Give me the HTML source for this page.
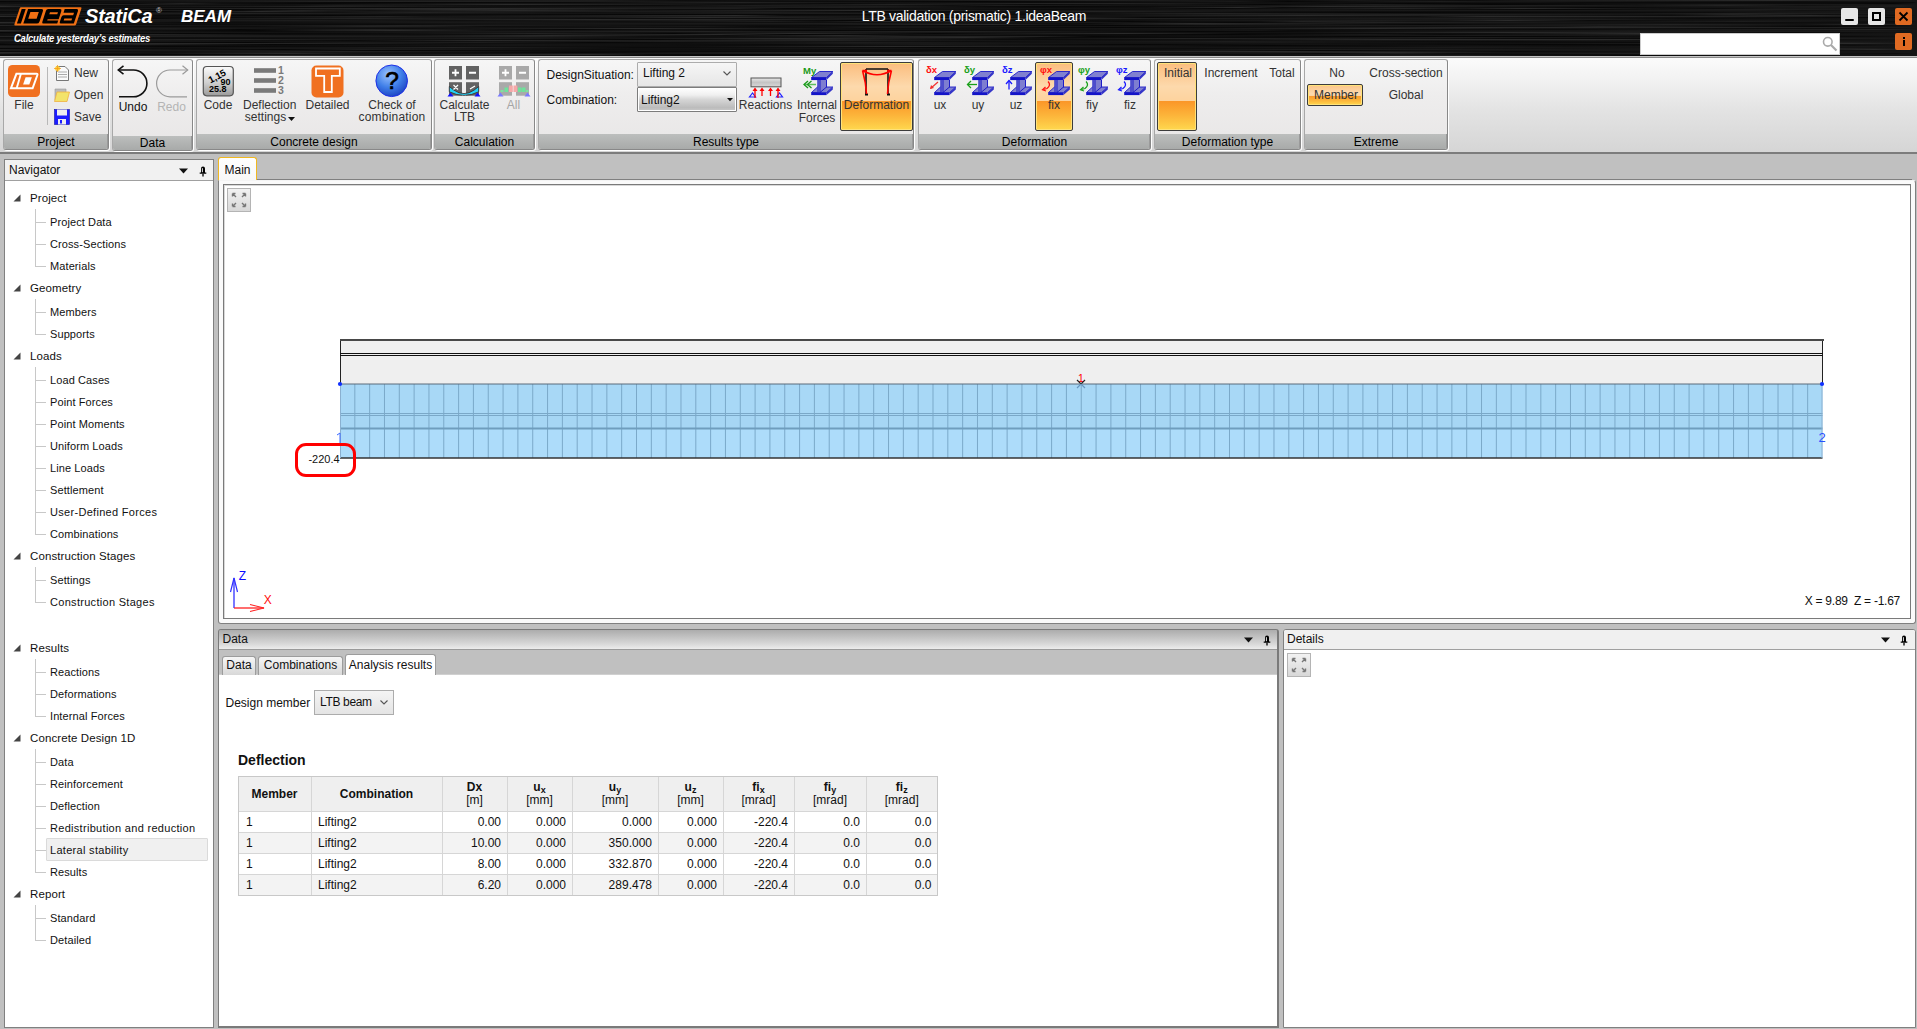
<!DOCTYPE html>
<html><head><meta charset="utf-8">
<style>
*{margin:0;padding:0;box-sizing:border-box}
html,body{width:1917px;height:1029px;overflow:hidden;background:#c0c0c0;font-family:"Liberation Sans",sans-serif;font-size:12px;color:#000;position:relative}
.a{position:absolute}
.t{position:absolute;white-space:nowrap;line-height:1}
svg{overflow:visible}
sub{font-size:9px;vertical-align:-2px;line-height:0}
</style></head><body>
<div class="a" style="left:0;top:0;width:1917px;height:56px;background:#0c0c0c;overflow:hidden">
<div class="a" style="left:0;top:0px;width:1917px;height:1px;background:linear-gradient(90deg,rgb(23,23,23) 0px,rgb(23,23,23) 183px,rgb(25,25,25) 338px,rgb(29,29,29) 596px,rgb(13,13,13) 684px,rgb(25,25,25) 929px,rgb(35,35,35) 1090px,rgb(13,13,13) 1287px,rgb(23,23,23) 1351px,rgb(13,13,13) 1468px,rgb(25,25,25) 1531px,rgb(43,43,43) 1778px,rgb(21,21,21) 1917px)"></div>
<div class="a" style="left:0;top:1px;width:1917px;height:1px;background:linear-gradient(90deg,rgb(7,7,7) 0px,rgb(21,21,21) 192px,rgb(35,35,35) 347px,rgb(29,29,29) 576px,rgb(13,13,13) 782px,rgb(7,7,7) 981px,rgb(25,25,25) 1233px,rgb(7,7,7) 1289px,rgb(15,15,15) 1338px,rgb(29,29,29) 1439px,rgb(23,23,23) 1486px,rgb(23,23,23) 1609px,rgb(15,15,15) 1800px,rgb(21,21,21) 1917px)"></div>
<div class="a" style="left:0;top:2px;width:1917px;height:1px;background:linear-gradient(90deg,rgb(15,15,15) 0px,rgb(17,17,17) 203px,rgb(7,7,7) 370px,rgb(11,11,11) 579px,rgb(35,35,35) 736px,rgb(21,21,21) 847px,rgb(11,11,11) 1028px,rgb(17,17,17) 1249px,rgb(15,15,15) 1369px,rgb(17,17,17) 1540px,rgb(11,11,11) 1587px,rgb(11,11,11) 1771px,rgb(11,11,11) 1913px,rgb(21,21,21) 1917px)"></div>
<div class="a" style="left:0;top:3px;width:1917px;height:1px;background:linear-gradient(90deg,rgb(17,17,17) 0px,rgb(11,11,11) 138px,rgb(35,35,35) 182px,rgb(15,15,15) 222px,rgb(7,7,7) 315px,rgb(21,21,21) 475px,rgb(21,21,21) 696px,rgb(11,11,11) 843px,rgb(35,35,35) 1027px,rgb(35,35,35) 1117px,rgb(19,19,19) 1226px,rgb(17,17,17) 1288px,rgb(7,7,7) 1413px,rgb(11,11,11) 1557px,rgb(15,15,15) 1631px,rgb(11,11,11) 1851px,rgb(7,7,7) 1893px,rgb(21,21,21) 1917px)"></div>
<div class="a" style="left:0;top:4px;width:1917px;height:1px;background:linear-gradient(90deg,rgb(23,23,23) 0px,rgb(35,35,35) 85px,rgb(15,15,15) 268px,rgb(25,25,25) 422px,rgb(43,43,43) 510px,rgb(13,13,13) 746px,rgb(35,35,35) 893px,rgb(11,11,11) 1031px,rgb(21,21,21) 1172px,rgb(7,7,7) 1266px,rgb(29,29,29) 1375px,rgb(7,7,7) 1492px,rgb(13,13,13) 1585px,rgb(29,29,29) 1725px,rgb(21,21,21) 1917px)"></div>
<div class="a" style="left:0;top:5px;width:1917px;height:1px;background:linear-gradient(90deg,rgb(29,29,29) 0px,rgb(7,7,7) 65px,rgb(15,15,15) 142px,rgb(17,17,17) 295px,rgb(29,29,29) 337px,rgb(17,17,17) 461px,rgb(11,11,11) 599px,rgb(11,11,11) 658px,rgb(29,29,29) 751px,rgb(15,15,15) 953px,rgb(29,29,29) 996px,rgb(19,19,19) 1130px,rgb(23,23,23) 1329px,rgb(29,29,29) 1401px,rgb(29,29,29) 1564px,rgb(21,21,21) 1638px,rgb(35,35,35) 1724px,rgb(17,17,17) 1803px,rgb(29,29,29) 1901px,rgb(21,21,21) 1917px)"></div>
<div class="a" style="left:0;top:6px;width:1917px;height:1px;background:linear-gradient(90deg,rgb(43,43,43) 0px,rgb(13,13,13) 88px,rgb(35,35,35) 317px,rgb(15,15,15) 498px,rgb(21,21,21) 713px,rgb(29,29,29) 876px,rgb(21,21,21) 936px,rgb(11,11,11) 988px,rgb(7,7,7) 1055px,rgb(17,17,17) 1226px,rgb(43,43,43) 1327px,rgb(21,21,21) 1547px,rgb(21,21,21) 1652px,rgb(29,29,29) 1902px,rgb(21,21,21) 1917px)"></div>
<div class="a" style="left:0;top:7px;width:1917px;height:1px;background:linear-gradient(90deg,rgb(17,17,17) 0px,rgb(13,13,13) 173px,rgb(11,11,11) 397px,rgb(15,15,15) 469px,rgb(25,25,25) 631px,rgb(29,29,29) 838px,rgb(11,11,11) 1035px,rgb(15,15,15) 1146px,rgb(43,43,43) 1238px,rgb(11,11,11) 1282px,rgb(21,21,21) 1390px,rgb(15,15,15) 1544px,rgb(7,7,7) 1599px,rgb(17,17,17) 1684px,rgb(25,25,25) 1818px,rgb(21,21,21) 1917px)"></div>
<div class="a" style="left:0;top:8px;width:1917px;height:1px;background:linear-gradient(90deg,rgb(13,13,13) 0px,rgb(19,19,19) 63px,rgb(23,23,23) 138px,rgb(35,35,35) 262px,rgb(43,43,43) 489px,rgb(29,29,29) 662px,rgb(29,29,29) 737px,rgb(7,7,7) 785px,rgb(19,19,19) 946px,rgb(17,17,17) 1165px,rgb(7,7,7) 1213px,rgb(35,35,35) 1406px,rgb(23,23,23) 1465px,rgb(43,43,43) 1522px,rgb(19,19,19) 1641px,rgb(11,11,11) 1715px,rgb(23,23,23) 1774px,rgb(21,21,21) 1917px)"></div>
<div class="a" style="left:0;top:9px;width:1917px;height:1px;background:linear-gradient(90deg,rgb(19,19,19) 0px,rgb(7,7,7) 228px,rgb(43,43,43) 456px,rgb(13,13,13) 676px,rgb(19,19,19) 919px,rgb(11,11,11) 1049px,rgb(23,23,23) 1264px,rgb(21,21,21) 1323px,rgb(7,7,7) 1565px,rgb(29,29,29) 1732px,rgb(29,29,29) 1775px,rgb(21,21,21) 1917px)"></div>
<div class="a" style="left:0;top:10px;width:1917px;height:1px;background:linear-gradient(90deg,rgb(21,21,21) 0px,rgb(29,29,29) 137px,rgb(29,29,29) 180px,rgb(11,11,11) 238px,rgb(35,35,35) 301px,rgb(17,17,17) 370px,rgb(43,43,43) 516px,rgb(21,21,21) 640px,rgb(43,43,43) 868px,rgb(23,23,23) 1056px,rgb(23,23,23) 1208px,rgb(25,25,25) 1462px,rgb(25,25,25) 1523px,rgb(25,25,25) 1755px,rgb(17,17,17) 1802px,rgb(21,21,21) 1917px)"></div>
<div class="a" style="left:0;top:11px;width:1917px;height:1px;background:linear-gradient(90deg,rgb(11,11,11) 0px,rgb(7,7,7) 163px,rgb(43,43,43) 261px,rgb(23,23,23) 329px,rgb(29,29,29) 568px,rgb(23,23,23) 776px,rgb(7,7,7) 881px,rgb(17,17,17) 1015px,rgb(35,35,35) 1091px,rgb(15,15,15) 1287px,rgb(13,13,13) 1459px,rgb(19,19,19) 1691px,rgb(23,23,23) 1899px,rgb(21,21,21) 1917px)"></div>
<div class="a" style="left:0;top:12px;width:1917px;height:1px;background:linear-gradient(90deg,rgb(15,15,15) 0px,rgb(21,21,21) 123px,rgb(17,17,17) 333px,rgb(35,35,35) 423px,rgb(15,15,15) 573px,rgb(21,21,21) 667px,rgb(29,29,29) 763px,rgb(15,15,15) 884px,rgb(13,13,13) 958px,rgb(19,19,19) 1125px,rgb(7,7,7) 1379px,rgb(11,11,11) 1601px,rgb(13,13,13) 1711px,rgb(23,23,23) 1779px,rgb(21,21,21) 1917px)"></div>
<div class="a" style="left:0;top:13px;width:1917px;height:1px;background:linear-gradient(90deg,rgb(17,17,17) 0px,rgb(21,21,21) 94px,rgb(35,35,35) 231px,rgb(23,23,23) 404px,rgb(19,19,19) 616px,rgb(29,29,29) 839px,rgb(19,19,19) 994px,rgb(7,7,7) 1053px,rgb(29,29,29) 1164px,rgb(35,35,35) 1214px,rgb(17,17,17) 1435px,rgb(19,19,19) 1621px,rgb(35,35,35) 1740px,rgb(21,21,21) 1917px)"></div>
<div class="a" style="left:0;top:14px;width:1917px;height:1px;background:linear-gradient(90deg,rgb(29,29,29) 0px,rgb(35,35,35) 44px,rgb(21,21,21) 118px,rgb(15,15,15) 274px,rgb(17,17,17) 320px,rgb(13,13,13) 420px,rgb(7,7,7) 663px,rgb(11,11,11) 864px,rgb(11,11,11) 1018px,rgb(25,25,25) 1219px,rgb(35,35,35) 1426px,rgb(19,19,19) 1672px,rgb(35,35,35) 1731px,rgb(15,15,15) 1821px,rgb(21,21,21) 1917px)"></div>
<div class="a" style="left:0;top:15px;width:1917px;height:1px;background:linear-gradient(90deg,rgb(23,23,23) 0px,rgb(13,13,13) 105px,rgb(7,7,7) 327px,rgb(23,23,23) 560px,rgb(43,43,43) 736px,rgb(13,13,13) 785px,rgb(17,17,17) 882px,rgb(19,19,19) 1121px,rgb(43,43,43) 1299px,rgb(25,25,25) 1472px,rgb(13,13,13) 1669px,rgb(43,43,43) 1809px,rgb(11,11,11) 1906px,rgb(21,21,21) 1917px)"></div>
<div class="a" style="left:0;top:16px;width:1917px;height:1px;background:linear-gradient(90deg,rgb(43,43,43) 0px,rgb(13,13,13) 139px,rgb(23,23,23) 294px,rgb(35,35,35) 384px,rgb(21,21,21) 425px,rgb(29,29,29) 605px,rgb(25,25,25) 812px,rgb(19,19,19) 1055px,rgb(19,19,19) 1213px,rgb(15,15,15) 1419px,rgb(43,43,43) 1484px,rgb(35,35,35) 1733px,rgb(21,21,21) 1917px)"></div>
<div class="a" style="left:0;top:17px;width:1917px;height:1px;background:linear-gradient(90deg,rgb(11,11,11) 0px,rgb(15,15,15) 94px,rgb(11,11,11) 233px,rgb(25,25,25) 352px,rgb(19,19,19) 594px,rgb(43,43,43) 701px,rgb(7,7,7) 960px,rgb(25,25,25) 1089px,rgb(7,7,7) 1150px,rgb(19,19,19) 1302px,rgb(21,21,21) 1482px,rgb(17,17,17) 1718px,rgb(7,7,7) 1882px,rgb(21,21,21) 1917px)"></div>
<div class="a" style="left:0;top:18px;width:1917px;height:1px;background:linear-gradient(90deg,rgb(11,11,11) 0px,rgb(7,7,7) 149px,rgb(25,25,25) 233px,rgb(35,35,35) 358px,rgb(13,13,13) 599px,rgb(13,13,13) 759px,rgb(43,43,43) 931px,rgb(35,35,35) 1103px,rgb(23,23,23) 1319px,rgb(29,29,29) 1485px,rgb(11,11,11) 1701px,rgb(21,21,21) 1917px)"></div>
<div class="a" style="left:0;top:19px;width:1917px;height:1px;background:linear-gradient(90deg,rgb(15,15,15) 0px,rgb(25,25,25) 152px,rgb(17,17,17) 335px,rgb(43,43,43) 587px,rgb(35,35,35) 770px,rgb(25,25,25) 852px,rgb(25,25,25) 1023px,rgb(17,17,17) 1128px,rgb(21,21,21) 1339px,rgb(29,29,29) 1595px,rgb(17,17,17) 1688px,rgb(21,21,21) 1917px)"></div>
<div class="a" style="left:0;top:20px;width:1917px;height:1px;background:linear-gradient(90deg,rgb(13,13,13) 0px,rgb(25,25,25) 179px,rgb(29,29,29) 288px,rgb(15,15,15) 455px,rgb(25,25,25) 600px,rgb(25,25,25) 669px,rgb(29,29,29) 710px,rgb(7,7,7) 846px,rgb(7,7,7) 1023px,rgb(21,21,21) 1195px,rgb(29,29,29) 1374px,rgb(23,23,23) 1445px,rgb(43,43,43) 1508px,rgb(11,11,11) 1590px,rgb(23,23,23) 1767px,rgb(21,21,21) 1912px,rgb(21,21,21) 1917px)"></div>
<div class="a" style="left:0;top:21px;width:1917px;height:1px;background:linear-gradient(90deg,rgb(15,15,15) 0px,rgb(23,23,23) 161px,rgb(19,19,19) 233px,rgb(23,23,23) 384px,rgb(19,19,19) 558px,rgb(15,15,15) 625px,rgb(29,29,29) 772px,rgb(17,17,17) 819px,rgb(43,43,43) 892px,rgb(7,7,7) 1131px,rgb(15,15,15) 1180px,rgb(15,15,15) 1259px,rgb(35,35,35) 1302px,rgb(19,19,19) 1414px,rgb(19,19,19) 1639px,rgb(29,29,29) 1741px,rgb(11,11,11) 1908px,rgb(21,21,21) 1917px)"></div>
<div class="a" style="left:0;top:22px;width:1917px;height:1px;background:linear-gradient(90deg,rgb(43,43,43) 0px,rgb(11,11,11) 189px,rgb(25,25,25) 447px,rgb(17,17,17) 646px,rgb(15,15,15) 869px,rgb(25,25,25) 1088px,rgb(7,7,7) 1239px,rgb(35,35,35) 1375px,rgb(25,25,25) 1520px,rgb(13,13,13) 1717px,rgb(15,15,15) 1894px,rgb(21,21,21) 1917px)"></div>
<div class="a" style="left:0;top:23px;width:1917px;height:1px;background:linear-gradient(90deg,rgb(25,25,25) 0px,rgb(15,15,15) 203px,rgb(15,15,15) 378px,rgb(25,25,25) 635px,rgb(29,29,29) 831px,rgb(13,13,13) 1090px,rgb(43,43,43) 1189px,rgb(19,19,19) 1389px,rgb(19,19,19) 1475px,rgb(19,19,19) 1669px,rgb(15,15,15) 1758px,rgb(21,21,21) 1917px)"></div>
<div class="a" style="left:0;top:24px;width:1917px;height:1px;background:linear-gradient(90deg,rgb(15,15,15) 0px,rgb(13,13,13) 64px,rgb(13,13,13) 165px,rgb(11,11,11) 391px,rgb(21,21,21) 497px,rgb(21,21,21) 561px,rgb(21,21,21) 814px,rgb(43,43,43) 993px,rgb(15,15,15) 1065px,rgb(35,35,35) 1208px,rgb(7,7,7) 1423px,rgb(15,15,15) 1487px,rgb(35,35,35) 1672px,rgb(19,19,19) 1803px,rgb(43,43,43) 1872px,rgb(21,21,21) 1917px)"></div>
<div class="a" style="left:0;top:25px;width:1917px;height:1px;background:linear-gradient(90deg,rgb(35,35,35) 0px,rgb(19,19,19) 234px,rgb(35,35,35) 402px,rgb(15,15,15) 655px,rgb(11,11,11) 900px,rgb(11,11,11) 1063px,rgb(7,7,7) 1109px,rgb(25,25,25) 1344px,rgb(25,25,25) 1541px,rgb(23,23,23) 1726px,rgb(15,15,15) 1803px,rgb(11,11,11) 1890px,rgb(21,21,21) 1917px)"></div>
<div class="a" style="left:0;top:26px;width:1917px;height:1px;background:linear-gradient(90deg,rgb(13,13,13) 0px,rgb(13,13,13) 255px,rgb(35,35,35) 367px,rgb(29,29,29) 431px,rgb(13,13,13) 486px,rgb(23,23,23) 700px,rgb(11,11,11) 759px,rgb(21,21,21) 882px,rgb(21,21,21) 1041px,rgb(19,19,19) 1212px,rgb(15,15,15) 1362px,rgb(19,19,19) 1555px,rgb(35,35,35) 1598px,rgb(7,7,7) 1817px,rgb(21,21,21) 1917px)"></div>
<div class="a" style="left:0;top:27px;width:1917px;height:1px;background:linear-gradient(90deg,rgb(15,15,15) 0px,rgb(21,21,21) 86px,rgb(19,19,19) 242px,rgb(19,19,19) 471px,rgb(15,15,15) 614px,rgb(13,13,13) 808px,rgb(25,25,25) 872px,rgb(7,7,7) 1114px,rgb(11,11,11) 1236px,rgb(43,43,43) 1481px,rgb(35,35,35) 1741px,rgb(29,29,29) 1884px,rgb(21,21,21) 1917px)"></div>
<div class="a" style="left:0;top:28px;width:1917px;height:1px;background:linear-gradient(90deg,rgb(15,15,15) 0px,rgb(29,29,29) 169px,rgb(17,17,17) 296px,rgb(11,11,11) 407px,rgb(43,43,43) 637px,rgb(13,13,13) 876px,rgb(21,21,21) 1124px,rgb(19,19,19) 1198px,rgb(43,43,43) 1375px,rgb(21,21,21) 1509px,rgb(13,13,13) 1744px,rgb(15,15,15) 1887px,rgb(21,21,21) 1917px)"></div>
<div class="a" style="left:0;top:29px;width:1917px;height:1px;background:linear-gradient(90deg,rgb(13,13,13) 0px,rgb(19,19,19) 58px,rgb(23,23,23) 175px,rgb(7,7,7) 240px,rgb(35,35,35) 371px,rgb(7,7,7) 570px,rgb(17,17,17) 669px,rgb(17,17,17) 879px,rgb(15,15,15) 1005px,rgb(21,21,21) 1213px,rgb(13,13,13) 1398px,rgb(11,11,11) 1574px,rgb(25,25,25) 1713px,rgb(35,35,35) 1880px,rgb(21,21,21) 1917px)"></div>
<div class="a" style="left:0;top:30px;width:1917px;height:1px;background:linear-gradient(90deg,rgb(43,43,43) 0px,rgb(21,21,21) 70px,rgb(7,7,7) 257px,rgb(29,29,29) 326px,rgb(43,43,43) 393px,rgb(17,17,17) 493px,rgb(21,21,21) 646px,rgb(7,7,7) 815px,rgb(15,15,15) 1049px,rgb(21,21,21) 1254px,rgb(11,11,11) 1296px,rgb(17,17,17) 1402px,rgb(19,19,19) 1512px,rgb(25,25,25) 1692px,rgb(21,21,21) 1862px,rgb(21,21,21) 1917px)"></div>
<div class="a" style="left:0;top:31px;width:1917px;height:1px;background:linear-gradient(90deg,rgb(29,29,29) 0px,rgb(11,11,11) 256px,rgb(23,23,23) 459px,rgb(35,35,35) 706px,rgb(25,25,25) 765px,rgb(35,35,35) 957px,rgb(7,7,7) 1191px,rgb(13,13,13) 1329px,rgb(23,23,23) 1467px,rgb(23,23,23) 1550px,rgb(29,29,29) 1728px,rgb(21,21,21) 1917px)"></div>
<div class="a" style="left:0;top:32px;width:1917px;height:1px;background:linear-gradient(90deg,rgb(7,7,7) 0px,rgb(23,23,23) 149px,rgb(17,17,17) 296px,rgb(21,21,21) 470px,rgb(17,17,17) 663px,rgb(25,25,25) 796px,rgb(23,23,23) 909px,rgb(17,17,17) 1116px,rgb(17,17,17) 1299px,rgb(43,43,43) 1508px,rgb(17,17,17) 1739px,rgb(7,7,7) 1785px,rgb(21,21,21) 1917px)"></div>
<div class="a" style="left:0;top:33px;width:1917px;height:1px;background:linear-gradient(90deg,rgb(15,15,15) 0px,rgb(7,7,7) 189px,rgb(13,13,13) 391px,rgb(35,35,35) 535px,rgb(7,7,7) 674px,rgb(43,43,43) 794px,rgb(7,7,7) 935px,rgb(43,43,43) 1123px,rgb(11,11,11) 1244px,rgb(15,15,15) 1488px,rgb(43,43,43) 1637px,rgb(17,17,17) 1799px,rgb(21,21,21) 1917px)"></div>
<div class="a" style="left:0;top:34px;width:1917px;height:1px;background:linear-gradient(90deg,rgb(15,15,15) 0px,rgb(25,25,25) 51px,rgb(43,43,43) 116px,rgb(13,13,13) 275px,rgb(15,15,15) 524px,rgb(43,43,43) 718px,rgb(7,7,7) 787px,rgb(21,21,21) 986px,rgb(11,11,11) 1142px,rgb(7,7,7) 1234px,rgb(25,25,25) 1365px,rgb(11,11,11) 1444px,rgb(23,23,23) 1577px,rgb(35,35,35) 1652px,rgb(23,23,23) 1798px,rgb(21,21,21) 1917px)"></div>
<div class="a" style="left:0;top:35px;width:1917px;height:1px;background:linear-gradient(90deg,rgb(17,17,17) 0px,rgb(29,29,29) 203px,rgb(21,21,21) 417px,rgb(43,43,43) 550px,rgb(13,13,13) 725px,rgb(43,43,43) 839px,rgb(15,15,15) 911px,rgb(11,11,11) 1074px,rgb(17,17,17) 1242px,rgb(25,25,25) 1482px,rgb(19,19,19) 1681px,rgb(17,17,17) 1791px,rgb(21,21,21) 1917px)"></div>
<div class="a" style="left:0;top:36px;width:1917px;height:1px;background:linear-gradient(90deg,rgb(35,35,35) 0px,rgb(29,29,29) 225px,rgb(29,29,29) 443px,rgb(35,35,35) 531px,rgb(15,15,15) 642px,rgb(15,15,15) 730px,rgb(35,35,35) 898px,rgb(35,35,35) 988px,rgb(35,35,35) 1038px,rgb(7,7,7) 1093px,rgb(17,17,17) 1202px,rgb(7,7,7) 1350px,rgb(7,7,7) 1549px,rgb(15,15,15) 1615px,rgb(17,17,17) 1793px,rgb(11,11,11) 1851px,rgb(21,21,21) 1917px)"></div>
<div class="a" style="left:0;top:37px;width:1917px;height:1px;background:linear-gradient(90deg,rgb(13,13,13) 0px,rgb(15,15,15) 180px,rgb(19,19,19) 381px,rgb(23,23,23) 544px,rgb(15,15,15) 674px,rgb(19,19,19) 800px,rgb(43,43,43) 966px,rgb(11,11,11) 1040px,rgb(11,11,11) 1285px,rgb(29,29,29) 1439px,rgb(15,15,15) 1693px,rgb(21,21,21) 1846px,rgb(21,21,21) 1917px)"></div>
<div class="a" style="left:0;top:38px;width:1917px;height:1px;background:linear-gradient(90deg,rgb(17,17,17) 0px,rgb(13,13,13) 139px,rgb(13,13,13) 273px,rgb(29,29,29) 480px,rgb(17,17,17) 603px,rgb(43,43,43) 783px,rgb(13,13,13) 1034px,rgb(35,35,35) 1183px,rgb(29,29,29) 1317px,rgb(23,23,23) 1381px,rgb(11,11,11) 1503px,rgb(11,11,11) 1682px,rgb(29,29,29) 1832px,rgb(21,21,21) 1917px)"></div>
<div class="a" style="left:0;top:39px;width:1917px;height:1px;background:linear-gradient(90deg,rgb(23,23,23) 0px,rgb(35,35,35) 248px,rgb(17,17,17) 406px,rgb(7,7,7) 656px,rgb(17,17,17) 715px,rgb(35,35,35) 809px,rgb(11,11,11) 1003px,rgb(17,17,17) 1220px,rgb(43,43,43) 1386px,rgb(43,43,43) 1621px,rgb(17,17,17) 1744px,rgb(15,15,15) 1820px,rgb(21,21,21) 1917px)"></div>
<div class="a" style="left:0;top:40px;width:1917px;height:1px;background:linear-gradient(90deg,rgb(35,35,35) 0px,rgb(19,19,19) 225px,rgb(11,11,11) 358px,rgb(43,43,43) 480px,rgb(29,29,29) 632px,rgb(35,35,35) 824px,rgb(23,23,23) 935px,rgb(17,17,17) 1110px,rgb(19,19,19) 1267px,rgb(21,21,21) 1363px,rgb(25,25,25) 1589px,rgb(11,11,11) 1692px,rgb(19,19,19) 1824px,rgb(19,19,19) 1870px,rgb(21,21,21) 1917px)"></div>
<div class="a" style="left:0;top:41px;width:1917px;height:1px;background:linear-gradient(90deg,rgb(21,21,21) 0px,rgb(21,21,21) 189px,rgb(15,15,15) 432px,rgb(29,29,29) 661px,rgb(21,21,21) 795px,rgb(13,13,13) 973px,rgb(29,29,29) 1227px,rgb(13,13,13) 1411px,rgb(11,11,11) 1496px,rgb(23,23,23) 1730px,rgb(21,21,21) 1917px)"></div>
<div class="a" style="left:0;top:42px;width:1917px;height:1px;background:linear-gradient(90deg,rgb(17,17,17) 0px,rgb(7,7,7) 247px,rgb(25,25,25) 343px,rgb(25,25,25) 397px,rgb(29,29,29) 477px,rgb(7,7,7) 592px,rgb(21,21,21) 798px,rgb(29,29,29) 854px,rgb(17,17,17) 1033px,rgb(25,25,25) 1274px,rgb(19,19,19) 1335px,rgb(17,17,17) 1395px,rgb(11,11,11) 1623px,rgb(11,11,11) 1743px,rgb(35,35,35) 1789px,rgb(21,21,21) 1917px)"></div>
<div class="a" style="left:0;top:43px;width:1917px;height:1px;background:linear-gradient(90deg,rgb(13,13,13) 0px,rgb(43,43,43) 64px,rgb(35,35,35) 312px,rgb(15,15,15) 460px,rgb(15,15,15) 682px,rgb(25,25,25) 847px,rgb(23,23,23) 973px,rgb(19,19,19) 1113px,rgb(19,19,19) 1239px,rgb(13,13,13) 1451px,rgb(23,23,23) 1617px,rgb(43,43,43) 1794px,rgb(43,43,43) 1852px,rgb(21,21,21) 1917px)"></div>
<div class="a" style="left:0;top:44px;width:1917px;height:1px;background:linear-gradient(90deg,rgb(7,7,7) 0px,rgb(35,35,35) 145px,rgb(7,7,7) 274px,rgb(21,21,21) 520px,rgb(11,11,11) 773px,rgb(25,25,25) 931px,rgb(7,7,7) 1134px,rgb(19,19,19) 1308px,rgb(7,7,7) 1529px,rgb(11,11,11) 1774px,rgb(21,21,21) 1917px)"></div>
<div class="a" style="left:0;top:45px;width:1917px;height:1px;background:linear-gradient(90deg,rgb(21,21,21) 0px,rgb(15,15,15) 77px,rgb(13,13,13) 306px,rgb(21,21,21) 508px,rgb(13,13,13) 723px,rgb(15,15,15) 845px,rgb(21,21,21) 984px,rgb(17,17,17) 1159px,rgb(7,7,7) 1269px,rgb(17,17,17) 1429px,rgb(11,11,11) 1656px,rgb(35,35,35) 1773px,rgb(13,13,13) 1852px,rgb(23,23,23) 1907px,rgb(21,21,21) 1917px)"></div>
<div class="a" style="left:0;top:46px;width:1917px;height:1px;background:linear-gradient(90deg,rgb(29,29,29) 0px,rgb(7,7,7) 163px,rgb(11,11,11) 283px,rgb(13,13,13) 373px,rgb(15,15,15) 504px,rgb(15,15,15) 694px,rgb(43,43,43) 887px,rgb(29,29,29) 1047px,rgb(15,15,15) 1217px,rgb(13,13,13) 1370px,rgb(21,21,21) 1481px,rgb(17,17,17) 1565px,rgb(25,25,25) 1765px,rgb(21,21,21) 1917px)"></div>
<div class="a" style="left:0;top:47px;width:1917px;height:1px;background:linear-gradient(90deg,rgb(25,25,25) 0px,rgb(17,17,17) 162px,rgb(21,21,21) 326px,rgb(35,35,35) 453px,rgb(11,11,11) 633px,rgb(15,15,15) 796px,rgb(7,7,7) 938px,rgb(13,13,13) 1033px,rgb(21,21,21) 1278px,rgb(25,25,25) 1453px,rgb(17,17,17) 1691px,rgb(21,21,21) 1917px)"></div>
<div class="a" style="left:0;top:48px;width:1917px;height:1px;background:linear-gradient(90deg,rgb(7,7,7) 0px,rgb(15,15,15) 208px,rgb(23,23,23) 250px,rgb(23,23,23) 385px,rgb(15,15,15) 628px,rgb(21,21,21) 850px,rgb(13,13,13) 1045px,rgb(13,13,13) 1191px,rgb(19,19,19) 1428px,rgb(17,17,17) 1505px,rgb(25,25,25) 1752px,rgb(35,35,35) 1825px,rgb(21,21,21) 1917px)"></div>
<div class="a" style="left:0;top:49px;width:1917px;height:1px;background:linear-gradient(90deg,rgb(29,29,29) 0px,rgb(25,25,25) 108px,rgb(7,7,7) 284px,rgb(29,29,29) 362px,rgb(13,13,13) 599px,rgb(15,15,15) 639px,rgb(13,13,13) 889px,rgb(13,13,13) 1139px,rgb(19,19,19) 1200px,rgb(29,29,29) 1309px,rgb(25,25,25) 1532px,rgb(23,23,23) 1596px,rgb(23,23,23) 1813px,rgb(43,43,43) 1874px,rgb(21,21,21) 1917px)"></div>
<div class="a" style="left:0;top:50px;width:1917px;height:1px;background:linear-gradient(90deg,rgb(25,25,25) 0px,rgb(25,25,25) 259px,rgb(7,7,7) 376px,rgb(15,15,15) 618px,rgb(15,15,15) 764px,rgb(11,11,11) 978px,rgb(23,23,23) 1218px,rgb(7,7,7) 1311px,rgb(21,21,21) 1490px,rgb(23,23,23) 1664px,rgb(17,17,17) 1744px,rgb(17,17,17) 1864px,rgb(21,21,21) 1917px)"></div>
<div class="a" style="left:0;top:51px;width:1917px;height:1px;background:linear-gradient(90deg,rgb(11,11,11) 0px,rgb(17,17,17) 182px,rgb(35,35,35) 341px,rgb(11,11,11) 564px,rgb(11,11,11) 696px,rgb(13,13,13) 911px,rgb(35,35,35) 978px,rgb(35,35,35) 1118px,rgb(43,43,43) 1276px,rgb(11,11,11) 1516px,rgb(23,23,23) 1723px,rgb(21,21,21) 1766px,rgb(21,21,21) 1917px)"></div>
<div class="a" style="left:0;top:52px;width:1917px;height:1px;background:linear-gradient(90deg,rgb(43,43,43) 0px,rgb(15,15,15) 161px,rgb(29,29,29) 276px,rgb(23,23,23) 345px,rgb(7,7,7) 582px,rgb(43,43,43) 841px,rgb(29,29,29) 933px,rgb(17,17,17) 1011px,rgb(21,21,21) 1211px,rgb(43,43,43) 1389px,rgb(19,19,19) 1505px,rgb(21,21,21) 1738px,rgb(21,21,21) 1917px)"></div>
<div class="a" style="left:0;top:53px;width:1917px;height:1px;background:linear-gradient(90deg,rgb(35,35,35) 0px,rgb(17,17,17) 62px,rgb(15,15,15) 150px,rgb(43,43,43) 286px,rgb(19,19,19) 354px,rgb(17,17,17) 473px,rgb(23,23,23) 657px,rgb(35,35,35) 882px,rgb(23,23,23) 1006px,rgb(21,21,21) 1257px,rgb(11,11,11) 1320px,rgb(29,29,29) 1396px,rgb(13,13,13) 1460px,rgb(35,35,35) 1673px,rgb(13,13,13) 1894px,rgb(21,21,21) 1917px)"></div>
<div class="a" style="left:0;top:54px;width:1917px;height:1px;background:linear-gradient(90deg,rgb(15,15,15) 0px,rgb(7,7,7) 142px,rgb(23,23,23) 396px,rgb(43,43,43) 587px,rgb(11,11,11) 650px,rgb(7,7,7) 748px,rgb(11,11,11) 828px,rgb(21,21,21) 979px,rgb(11,11,11) 1216px,rgb(21,21,21) 1343px,rgb(13,13,13) 1513px,rgb(15,15,15) 1718px,rgb(21,21,21) 1917px)"></div>
<div class="a" style="left:0;top:55px;width:1917px;height:1px;background:linear-gradient(90deg,rgb(13,13,13) 0px,rgb(43,43,43) 250px,rgb(23,23,23) 388px,rgb(21,21,21) 512px,rgb(7,7,7) 711px,rgb(21,21,21) 937px,rgb(43,43,43) 1133px,rgb(15,15,15) 1254px,rgb(29,29,29) 1463px,rgb(7,7,7) 1638px,rgb(19,19,19) 1744px,rgb(19,19,19) 1832px,rgb(21,21,21) 1917px)"></div>
</div>
<div class="a" style="left:0px;top:56px;width:1917px;height:1px;background:#c4c4c4"></div>
<div class="a" style="left:0px;top:57px;width:1917px;height:1px;background:#8a8a8a"></div>
<svg class="a" style="left:12px;top:5px;" width="72" height="23" viewBox="0 0 72 23"><g transform="translate(2,20.5) skewX(-18.2)">
<rect x="0" y="-18.3" width="61.8" height="18.3" rx="1.2" fill="#f07014"/>
<rect x="2.3" y="-16.4" width="4" height="14.5" fill="#000"/>
<path d="M8.7 -16.4 H22 Q24.2 -16.4 24.2 -14.2 V-4.1 Q24.2 -1.9 22 -1.9 H8.7 Z M12 -13.4 V-6.7 H20.4 V-13.4 Z" fill="#000" fill-rule="evenodd"/>
<path d="M28.8 -16.4 H40.6 Q42.6 -16.4 42.6 -14.4 V-6.2 H31.6 V-4.9 H42.6 V-1.9 H28.8 Q27.1 -1.9 27.1 -3.6 V-14.7 Q27.1 -16.4 28.8 -16.4 Z M31.6 -13.3 V-11.2 H39.6 V-13.3 Z" fill="#000" fill-rule="evenodd"/>
<path d="M45.3 -16.4 H57.3 Q59.2 -16.4 59.2 -14.5 V-1.9 H46.3 Q44.6 -1.9 44.6 -3.6 V-8.6 Q44.6 -10.3 46.3 -10.3 H55.8 V-12.8 H45.3 Z M48 -7.1 V-5 H55.8 V-7.1 Z" fill="#000" fill-rule="evenodd"/>
</g></svg>
<div class="t" style="top:6.07px;font-size:20px;color:#fff;font-weight:bold;left:85px;font-style:italic;letter-spacing:-0.2px">StatiCa</div>
<div class="t" style="left:156px;top:7px;font-size:8px;color:#ccc">&#174;</div>
<div class="t" style="top:7.61px;font-size:17px;color:#fff;font-weight:bold;left:181px;font-style:italic">BEAM</div>
<div class="t" style="top:34.03px;font-size:10px;color:#fff;font-weight:bold;left:14px;font-style:italic;letter-spacing:-0.25px;transform:scaleX(0.95);transform-origin:left">Calculate yesterday&#8217;s estimates</div>
<div class="t" style="top:9.15px;font-size:14px;color:#fff;letter-spacing:-0.3px;left:824px;width:300px;text-align:center;">LTB validation (prismatic) 1.ideaBeam</div>
<div class="a" style="left:1841px;top:8px;width:17px;height:17px;background:#e6e6e6;border-radius:2px"></div>
<div class="a" style="left:1845px;top:19px;width:9px;height:2px;background:#000;border-radius:1px"></div>
<div class="a" style="left:1868px;top:8px;width:17px;height:17px;background:#e6e6e6;border-radius:2px"></div>
<div class="a" style="left:1872px;top:12px;width:9px;height:9px;border:2px solid #000"></div>
<div class="a" style="left:1895px;top:8px;width:17px;height:17px;background:#e06a22;border-radius:2px"></div>
<svg class="a" style="left:1899px;top:12px;" width="9" height="9" viewBox="0 0 9 9"><path d="M0.5 0.5 L8.5 8.5 M8.5 0.5 L0.5 8.5" stroke="#000" stroke-width="1.8"/></svg>
<div class="a" style="left:1895px;top:33px;width:17px;height:17px;background:#e06a22;border-radius:2px"></div>
<div class="a" style="left:1903px;top:37px;width:2px;height:2px;background:#000"></div>
<div class="a" style="left:1903px;top:40px;width:2px;height:6px;background:#000"></div>
<div class="a" style="left:1640px;top:33px;width:200px;height:22px;background:#fff;border:1px solid #ccc"></div>
<svg class="a" style="left:1822px;top:36px;" width="16" height="16" viewBox="0 0 16 16"><circle cx="5.8" cy="5.8" r="4.3" fill="none" stroke="#aaa" stroke-width="1.6"/><path d="M9 9 L14.5 14.5" stroke="#aaa" stroke-width="2.2"/></svg>
<div class="a" style="left:0px;top:58px;width:1917px;height:95px;background:linear-gradient(#fbfbfb,#f1f1f1 25%,#e3e3e3 55%,#d5d5d5)"></div>
<div class="a" style="left:0px;top:152px;width:1917px;height:2px;background:#7c7c7c"></div>
<div class="a" style="left:3px;top:59px;width:106px;height:91px;border:1px solid #a8a8a8;border-right-color:#888;border-bottom-color:#888;border-radius:3px;background:linear-gradient(#f6f6f6,#eeeded 40%,#e8e6e6);box-shadow:1px 1px 0 #fff;overflow:hidden"><div class="a" style="left:0;right:0;bottom:0;height:15px;background:linear-gradient(#bcbebd,#a8aaa9);box-shadow:inset -1px 0 0 #9a9a9a"></div></div>
<div class="t" style="top:135.84px;font-size:12px;color:#000;left:-94.0px;width:300px;text-align:center;">Project</div>
<div class="a" style="left:112px;top:59px;width:81px;height:92px;border:1px solid #a8a8a8;border-right-color:#888;border-bottom-color:#888;border-radius:3px;background:linear-gradient(#f6f6f6,#eeeded 40%,#e8e6e6);box-shadow:1px 1px 0 #fff;overflow:hidden"><div class="a" style="left:0;right:0;bottom:0;height:14px;background:linear-gradient(#bcbebd,#a8aaa9);box-shadow:inset -1px 0 0 #9a9a9a"></div></div>
<div class="t" style="top:137.34px;font-size:12px;color:#000;left:2.5px;width:300px;text-align:center;">Data</div>
<div class="a" style="left:196px;top:59px;width:236px;height:91px;border:1px solid #a8a8a8;border-right-color:#888;border-bottom-color:#888;border-radius:3px;background:linear-gradient(#f6f6f6,#eeeded 40%,#e8e6e6);box-shadow:1px 1px 0 #fff;overflow:hidden"><div class="a" style="left:0;right:0;bottom:0;height:15px;background:linear-gradient(#bcbebd,#a8aaa9);box-shadow:inset -1px 0 0 #9a9a9a"></div></div>
<div class="t" style="top:135.84px;font-size:12px;color:#000;left:164.0px;width:300px;text-align:center;">Concrete design</div>
<div class="a" style="left:434px;top:59px;width:101px;height:91px;border:1px solid #a8a8a8;border-right-color:#888;border-bottom-color:#888;border-radius:3px;background:linear-gradient(#f6f6f6,#eeeded 40%,#e8e6e6);box-shadow:1px 1px 0 #fff;overflow:hidden"><div class="a" style="left:0;right:0;bottom:0;height:15px;background:linear-gradient(#bcbebd,#a8aaa9);box-shadow:inset -1px 0 0 #9a9a9a"></div></div>
<div class="t" style="top:135.84px;font-size:12px;color:#000;left:334.5px;width:300px;text-align:center;">Calculation</div>
<div class="a" style="left:538px;top:59px;width:376px;height:91px;border:1px solid #a8a8a8;border-right-color:#888;border-bottom-color:#888;border-radius:3px;background:linear-gradient(#f6f6f6,#eeeded 40%,#e8e6e6);box-shadow:1px 1px 0 #fff;overflow:hidden"><div class="a" style="left:0;right:0;bottom:0;height:15px;background:linear-gradient(#bcbebd,#a8aaa9);box-shadow:inset -1px 0 0 #9a9a9a"></div></div>
<div class="t" style="top:135.84px;font-size:12px;color:#000;left:576.0px;width:300px;text-align:center;">Results type</div>
<div class="a" style="left:918px;top:59px;width:233px;height:91px;border:1px solid #a8a8a8;border-right-color:#888;border-bottom-color:#888;border-radius:3px;background:linear-gradient(#f6f6f6,#eeeded 40%,#e8e6e6);box-shadow:1px 1px 0 #fff;overflow:hidden"><div class="a" style="left:0;right:0;bottom:0;height:15px;background:linear-gradient(#bcbebd,#a8aaa9);box-shadow:inset -1px 0 0 #9a9a9a"></div></div>
<div class="t" style="top:135.84px;font-size:12px;color:#000;left:884.5px;width:300px;text-align:center;">Deformation</div>
<div class="a" style="left:1154px;top:59px;width:147px;height:91px;border:1px solid #a8a8a8;border-right-color:#888;border-bottom-color:#888;border-radius:3px;background:linear-gradient(#f6f6f6,#eeeded 40%,#e8e6e6);box-shadow:1px 1px 0 #fff;overflow:hidden"><div class="a" style="left:0;right:0;bottom:0;height:15px;background:linear-gradient(#bcbebd,#a8aaa9);box-shadow:inset -1px 0 0 #9a9a9a"></div></div>
<div class="t" style="top:135.84px;font-size:12px;color:#000;left:1077.5px;width:300px;text-align:center;">Deformation type</div>
<div class="a" style="left:1304px;top:59px;width:144px;height:91px;border:1px solid #a8a8a8;border-right-color:#888;border-bottom-color:#888;border-radius:3px;background:linear-gradient(#f6f6f6,#eeeded 40%,#e8e6e6);box-shadow:1px 1px 0 #fff;overflow:hidden"><div class="a" style="left:0;right:0;bottom:0;height:15px;background:linear-gradient(#bcbebd,#a8aaa9);box-shadow:inset -1px 0 0 #9a9a9a"></div></div>
<div class="t" style="top:135.84px;font-size:12px;color:#000;left:1226.0px;width:300px;text-align:center;">Extreme</div>
<svg class="a" style="left:8px;top:65px;" width="33" height="33" viewBox="0 0 33 33"><rect x="0" y="0" width="32" height="32" rx="4.5" fill="#f07020"/>
<path d="M2.9 23.3 L8.4 8.8 H28.6 Q29.8 8.8 29.4 10 L24.6 23.3 Z" fill="none" stroke="#fff" stroke-width="2"/>
<path d="M13 8.5 L8.6 23.5" stroke="#fff" stroke-width="1.9"/>
<path d="M17.6 12.2 H23.9 L21.3 19.5 H15.1 Z" fill="#fff"/></svg>
<div class="t" style="top:98.84px;font-size:12px;color:#333;left:-126px;width:300px;text-align:center;">File</div>
<div class="a" style="left:47px;top:67px;width:1px;height:58px;background:#b8b8b8"></div>
<svg class="a" style="left:54px;top:65px;" width="16" height="16" viewBox="0 0 16 16"><path d="M2.5 1.5 H11 L14.5 5 V15.5 H2.5 Z" fill="#fafafa" stroke="#777" stroke-width="1"/>
<path d="M4 7 H13 M4 9.5 H13 M4 12 H13" stroke="#aaa" stroke-width="1"/>
<circle cx="3.5" cy="3.5" r="2.5" fill="#ffd23a"/><path d="M3.5 0 V7 M0 3.5 H7" stroke="#f5a020" stroke-width="0.8"/></svg>
<div class="t" style="top:66.84px;font-size:12px;color:#333;left:74px;">New</div>
<svg class="a" style="left:54px;top:88px;" width="16" height="14" viewBox="0 0 16 14"><path d="M1 1 H12 V12 H1 Z" fill="#bbb" stroke="#999" stroke-width="0.6"/>
<path d="M3 4 H15.5 L13 13.5 H0.5 Z" fill="#f3e36a" stroke="#f0b040" stroke-width="0.8"/></svg>
<div class="t" style="top:88.84px;font-size:12px;color:#333;left:74px;">Open</div>
<svg class="a" style="left:54px;top:109px;" width="16" height="16" viewBox="0 0 16 16"><rect x="0.5" y="0.5" width="15" height="15" fill="#1c1cff" stroke="#1010a0" stroke-width="0.6"/>
<rect x="3" y="0.5" width="10" height="6" fill="#eee"/><rect x="4" y="10" width="8" height="5.5" fill="#eee"/><rect x="6" y="11" width="2" height="3.5" fill="#1c1cff"/></svg>
<div class="t" style="top:110.84px;font-size:12px;color:#333;left:74px;">Save</div>
<svg class="a" style="left:117px;top:65px;" width="34" height="34" viewBox="0 0 34 34"><path d="M1.5 5 H16.5 A13.4 13.4 0 0 1 16.5 31.8 H2" fill="none" stroke="#111" stroke-width="1.6"/><path d="M6.5 0.8 L1.3 5 L6.5 9.2" fill="none" stroke="#111" stroke-width="1.6"/></svg>
<div class="t" style="top:101.34px;font-size:12px;color:#111;left:-17px;width:300px;text-align:center;">Undo</div>
<svg class="a" style="left:155px;top:65px;" width="34" height="34" viewBox="0 0 34 34"><path d="M32.5 5 H15 A13.4 13.4 0 0 0 15 31.8 H32" fill="none" stroke="#9a9a9a" stroke-width="1.2"/><path d="M27.5 0.8 L32.7 5 L27.5 9.2" fill="none" stroke="#9a9a9a" stroke-width="1.2"/></svg>
<div class="t" style="top:101.34px;font-size:12px;color:#b4b4b4;left:21.5px;width:300px;text-align:center;">Redo</div>
<svg class="a" style="left:202px;top:65px;" width="33" height="32" viewBox="0 0 33 32"><defs><linearGradient id="gc" x1="0" y1="0" x2="0" y2="1"><stop offset="0" stop-color="#fbfbfb"/><stop offset="0.55" stop-color="#d0d0d0"/><stop offset="1" stop-color="#9a9a9a"/></linearGradient></defs>
<rect x="1.3" y="1.5" width="30" height="29.3" rx="3.5" fill="url(#gc)" stroke="#555" stroke-width="1.2"/>
<text x="6" y="15.5" style="font-family:Liberation Sans" font-weight="bold" font-size="9.5" fill="#000" transform="rotate(-28 13 12)">1,15</text>
<text x="18.5" y="20" style="font-family:Liberation Sans" font-weight="bold" font-size="9" fill="#000">90</text>
<text x="7" y="26.5" style="font-family:Liberation Sans" font-weight="bold" font-size="9" fill="#000">25.8</text></svg>
<div class="t" style="top:98.54px;font-size:12px;color:#333;left:68px;width:300px;text-align:center;">Code</div>
<svg class="a" style="left:252px;top:66px;" width="36" height="30" viewBox="0 0 36 30"><rect x="2" y="2.2" width="22" height="4.6" fill="#7a7a7a"/><rect x="2" y="12.2" width="22" height="4.6" fill="#7a7a7a"/><rect x="2" y="22.2" width="22" height="4.6" fill="#7a7a7a"/>
<text x="26" y="8" style="font-family:Liberation Sans" font-weight="bold" font-size="10.5" fill="#7a7a7a">1</text>
<text x="26" y="18" style="font-family:Liberation Sans" font-weight="bold" font-size="10.5" fill="#7a7a7a">2</text>
<text x="26" y="28" style="font-family:Liberation Sans" font-weight="bold" font-size="10.5" fill="#7a7a7a">3</text></svg>
<div class="t" style="top:98.54px;font-size:12px;color:#333;left:119.69999999999999px;width:300px;text-align:center;">Deflection</div>
<div class="t" style="top:111.34px;font-size:12px;color:#333;left:115.5px;width:300px;text-align:center;">settings</div>
<svg class="a" style="left:288px;top:117px;" width="7" height="4" viewBox="0 0 7 4"><path d="M0 0 H7 L3.5 4 Z" fill="#111"/></svg>
<svg class="a" style="left:311px;top:65px;" width="33" height="33" viewBox="0 0 33 33"><rect x="0.5" y="0.5" width="32" height="32" rx="5" fill="#f07020"/>
<path d="M5 3.5 H28.8 V10.8 H20.8 V27 H13.2 V10.8 H5 Z" fill="none" stroke="#fff" stroke-width="1.8"/></svg>
<div class="t" style="top:98.54px;font-size:12px;color:#333;left:177.5px;width:300px;text-align:center;">Detailed</div>
<svg class="a" style="left:375px;top:64px;" width="34" height="34" viewBox="0 0 34 34"><defs><radialGradient id="gq" cx="0.4" cy="0.3" r="0.75"><stop offset="0" stop-color="#9cc4ff"/><stop offset="0.55" stop-color="#3f7ee8"/><stop offset="1" stop-color="#1a3fc0"/></radialGradient></defs>
<circle cx="16.7" cy="16.8" r="15.8" fill="url(#gq)" stroke="#1e2fe8" stroke-width="1"/>
<text x="17" y="25.3" text-anchor="middle" style="font-family:Liberation Sans" font-size="24.5" fill="#000" stroke="#000" stroke-width="0.7">?</text></svg>
<div class="t" style="top:98.54px;font-size:12px;color:#333;left:242px;width:300px;text-align:center;">Check of</div>
<div class="t" style="top:111.34px;font-size:12px;color:#333;letter-spacing:0.2px;left:242px;width:300px;text-align:center;">combination</div>
<svg class="a" style="left:449px;top:66px;" width="32" height="32" viewBox="0 0 32 32"><rect x="0" y="0" width="13" height="13.5" fill="#626262"/><rect x="17" y="0" width="13" height="13.5" fill="#626262"/>
<rect x="0" y="16.2" width="13" height="13.5" fill="#626262"/><rect x="17" y="16.2" width="13" height="13.5" fill="#626262"/>
<path d="M3 6.75 H10 M6.5 3.2 V10.3 M20 6.75 H27" stroke="#fff" stroke-width="1.8"/><path d="M0.3 20.5 L5 24.2 Q15 31 25 24.2 L29.7 20.5 V25.8 Q15 33 0.3 25.8 Z" fill="#22d0f5" stroke="#3a2a2a" stroke-width="0.8"/>
<path d="M4.5 19 L9 23.5 M9 19 L4.5 23.5 M21 23 L26 20" stroke="#fff" stroke-width="1.2"/><path d="M1.5 26.5 L-1.5 30.5 H4.5 Z M28.5 26.5 L25.5 30.5 H31.5 Z" fill="#1010ff"/></svg>
<div class="t" style="top:98.54px;font-size:12px;color:#333;left:314.5px;width:300px;text-align:center;">Calculate</div>
<div class="t" style="top:111.34px;font-size:12px;color:#333;left:314.5px;width:300px;text-align:center;">LTB</div>
<svg class="a" style="left:499px;top:66px;" width="32" height="32" viewBox="0 0 32 32"><rect x="0" y="0" width="13" height="13.5" fill="#a9a9a9"/><rect x="17" y="0" width="13" height="13.5" fill="#a9a9a9"/>
<rect x="0" y="16.2" width="13" height="13.5" fill="#a9a9a9"/><rect x="17" y="16.2" width="13" height="13.5" fill="#a9a9a9"/>
<path d="M3 6.75 H10 M6.5 3.2 V10.3 M20 6.75 H27" stroke="#fff" stroke-width="1.8"/><rect x="1.5" y="24" width="3" height="2" fill="#7fe0a0"/><rect x="5.5" y="21.5" width="3.5" height="4.5" fill="#6ee39a"/><rect x="10" y="19.5" width="3.8" height="6.5" fill="#f5a8a8"/><rect x="14.5" y="19.5" width="3.8" height="6.5" fill="#f5a8a8"/><rect x="19" y="21.5" width="3.5" height="4.5" fill="#6ee39a"/><rect x="23" y="21.5" width="3.5" height="4.5" fill="#6ee39a"/><rect x="27" y="24" width="2.5" height="2" fill="#7fe0a0"/><path d="M1.5 26.5 L-1.5 30.5 H4.5 Z M28.5 26.5 L25.5 30.5 H31.5 Z" fill="#7a7aff"/></svg>
<div class="t" style="top:98.54px;font-size:12px;color:#a5a5a5;left:363.5px;width:300px;text-align:center;">All</div>
<div class="t" style="top:68.84px;font-size:12px;color:#111;left:546.5px;">DesignSituation:</div>
<div class="t" style="top:93.84px;font-size:12px;color:#111;left:546.5px;">Combination:</div>
<div class="a" style="left:637px;top:62px;width:100px;height:25px;background:linear-gradient(#f6f6f6,#e6e6e6);border:1px solid #acacac;border-radius:1px"></div>
<div class="t" style="top:67.34px;font-size:12px;color:#111;left:643px;">Lifting 2</div>
<svg class="a" style="left:723px;top:71px;" width="8" height="5" viewBox="0 0 8 5"><path d="M0.5 0.5 L4 4 L7.5 0.5" fill="none" stroke="#555" stroke-width="1.1"/></svg>
<div class="a" style="left:637px;top:87px;width:100px;height:25px;background:linear-gradient(#ffffff,#f0f0f0 30%,#d6d6d6 50%,#bcbcbc 85%,#c8c8c8);border:1px solid #7c7c7c;border-radius:1px;box-shadow:inset 0 0 0 1px #fff"></div>
<div class="t" style="top:94.14px;font-size:12px;color:#111;left:641px;">Lifting2</div>
<svg class="a" style="left:726.5px;top:98px;" width="6" height="3.5" viewBox="0 0 6 3.5"><path d="M0 0 H6 L3 3.3 Z" fill="#111"/></svg>
<svg class="a" style="left:750px;top:76px;" width="33" height="23" viewBox="0 0 33 23"><defs><linearGradient id="gr" x1="0" y1="0" x2="0" y2="1"><stop offset="0" stop-color="#e8e8e8"/><stop offset="0.5" stop-color="#c4c4c4"/><stop offset="1" stop-color="#d8d8d8"/></linearGradient></defs>
<rect x="1" y="2" width="30" height="8.8" fill="url(#gr)" stroke="#555" stroke-width="1"/>
<path d="M2.5 17 L-0.5 21 H5.5 Z M29.5 17 L26.5 21 H32.5 Z" fill="none" stroke="#22f" stroke-width="1.2"/>
<path d="M5 22 V13 M12 20 V13 M20.5 20 V13 M28 22 V13" stroke="#f00" stroke-width="1.3"/>
<path d="M2.5 15 L5 11.5 L7.5 15 Z M9.5 15 L12 11.5 L14.5 15 Z M18 15 L20.5 11.5 L23 15 Z M25.5 15 L28 11.5 L30.5 15 Z" fill="#f00"/></svg>
<div class="t" style="top:98.54px;font-size:12px;color:#333;left:615.5px;width:300px;text-align:center;">Reactions</div>
<svg class="a" style="left:811px;top:71px;" width="23" height="25" viewBox="0 0 23 25"><path d="M0.5 6.5 H15.5 L21.8 0.5 H8.5 Z" fill="#8080d0" stroke="#1c1cc8" stroke-width="0.9"/>
<rect x="0.2" y="6.5" width="15.3" height="2.6" fill="#1414c8"/>
<path d="M15.5 6.5 L21.8 0.5 V2.8 L15.5 9 Z" fill="#3434c8"/>
<path d="M0.5 21.5 H15.5 L21.8 16 H6.5 Z" fill="#8080d0" stroke="#1c1cc8" stroke-width="0.9"/>
<rect x="6.5" y="9" width="9" height="12.5" fill="#7e7ed0"/>
<path d="M7 9 V22 M9 9 V22 M15.5 9 V16.5" stroke="#1c1cc8" stroke-width="1"/>
<path d="M9 21.5 L15.5 16" stroke="#1c1cc8" stroke-width="1"/>
<rect x="0.2" y="21.5" width="15.3" height="2.6" fill="#1414c8"/>
<path d="M15.5 21.5 L21.8 16 V18.5 L15.5 24.1 Z" fill="#3434c8"/></svg>
<svg class="a" style="left:803px;top:65px;" width="20" height="10" viewBox="0 0 20 10"><text x="0" y="8.5" style="font-family:Liberation Sans" font-weight="bold" font-size="9.5" fill="#1a9a1a">My</text></svg>
<svg class="a" style="left:803px;top:80px;" width="14" height="9" viewBox="0 0 14 9"><path d="M1 4.5 H13" stroke="#60c060" stroke-width="1.5"/><path d="M5 1 L1 4.5 L5 8 M8.5 1 L4.5 4.5 L8.5 8" fill="none" stroke="#1a9a1a" stroke-width="1.3"/></svg>
<div class="t" style="top:98.54px;font-size:12px;color:#333;left:667px;width:300px;text-align:center;">Internal</div>
<div class="t" style="top:111.54px;font-size:12px;color:#333;left:667px;width:300px;text-align:center;">Forces</div>
<div class="a" style="left:840px;top:62px;width:73px;height:69px;border:1px solid #3c3c3c;border-radius:2px;background:linear-gradient(#fbbd7e,#fdd9ac 35%,#fdd39e 56%,#fb9628 57%,#fcb43a 78%,#ffd84e);box-shadow:inset 1px 1px 0 #ffe27a,inset -1px -1px 0 #ffe27a"></div>
<svg class="a" style="left:860px;top:65px;" width="34" height="31" viewBox="0 0 34 31"><path d="M6 4 H28 M6 4 V29 M28 4 V29" stroke="#111" stroke-width="1.6" fill="none"/>
<path d="M5 29.5 H8 M27 29.5 H30" stroke="#111" stroke-width="2"/>
<path d="M2.5 5.5 Q6 18 6.5 29 M31.5 5.5 Q28 18 27.5 29 M2.5 5.5 Q17 14 31.5 5.5 M2.5 5.5 H7 M27 5.5 H31.5" stroke="#f00" stroke-width="1.5" fill="none"/></svg>
<div class="t" style="top:98.54px;font-size:12px;color:#333;left:726.5px;width:300px;text-align:center;">Deformation</div>
<div class="a" style="left:1035px;top:62px;width:38px;height:69px;border:1px solid #3c3c3c;border-radius:2px;background:linear-gradient(#fbbd7e,#fdd9ac 35%,#fdd39e 56%,#fb9628 57%,#fcb43a 78%,#ffd84e);box-shadow:inset 1px 1px 0 #ffe27a,inset -1px -1px 0 #ffe27a"></div>
<svg class="a" style="left:934px;top:71px;" width="23" height="25" viewBox="0 0 23 25"><path d="M0.5 6.5 H15.5 L21.8 0.5 H8.5 Z" fill="#8080d0" stroke="#1c1cc8" stroke-width="0.9"/>
<rect x="0.2" y="6.5" width="15.3" height="2.6" fill="#1414c8"/>
<path d="M15.5 6.5 L21.8 0.5 V2.8 L15.5 9 Z" fill="#3434c8"/>
<path d="M0.5 21.5 H15.5 L21.8 16 H6.5 Z" fill="#8080d0" stroke="#1c1cc8" stroke-width="0.9"/>
<rect x="6.5" y="9" width="9" height="12.5" fill="#7e7ed0"/>
<path d="M7 9 V22 M9 9 V22 M15.5 9 V16.5" stroke="#1c1cc8" stroke-width="1"/>
<path d="M9 21.5 L15.5 16" stroke="#1c1cc8" stroke-width="1"/>
<rect x="0.2" y="21.5" width="15.3" height="2.6" fill="#1414c8"/>
<path d="M15.5 21.5 L21.8 16 V18.5 L15.5 24.1 Z" fill="#3434c8"/></svg>
<svg class="a" style="left:926px;top:64px;" width="14" height="11" viewBox="0 0 14 11"><text x="0" y="9" style="font-family:Liberation Sans" font-weight="bold" font-size="9.5" fill="#ff1010">&#948;x</text></svg>
<svg class="a" style="left:929px;top:81px;" width="10" height="9" viewBox="0 0 10 9"><path d="M9 1 L1.5 7.5" stroke="#f03030" stroke-width="1.2"/><path d="M1 8 L2 4 L5 7 Z" fill="#f03030"/></svg>
<div class="t" style="top:99.24px;font-size:12px;color:#333;left:790px;width:300px;text-align:center;">ux</div>
<svg class="a" style="left:972px;top:71px;" width="23" height="25" viewBox="0 0 23 25"><path d="M0.5 6.5 H15.5 L21.8 0.5 H8.5 Z" fill="#8080d0" stroke="#1c1cc8" stroke-width="0.9"/>
<rect x="0.2" y="6.5" width="15.3" height="2.6" fill="#1414c8"/>
<path d="M15.5 6.5 L21.8 0.5 V2.8 L15.5 9 Z" fill="#3434c8"/>
<path d="M0.5 21.5 H15.5 L21.8 16 H6.5 Z" fill="#8080d0" stroke="#1c1cc8" stroke-width="0.9"/>
<rect x="6.5" y="9" width="9" height="12.5" fill="#7e7ed0"/>
<path d="M7 9 V22 M9 9 V22 M15.5 9 V16.5" stroke="#1c1cc8" stroke-width="1"/>
<path d="M9 21.5 L15.5 16" stroke="#1c1cc8" stroke-width="1"/>
<rect x="0.2" y="21.5" width="15.3" height="2.6" fill="#1414c8"/>
<path d="M15.5 21.5 L21.8 16 V18.5 L15.5 24.1 Z" fill="#3434c8"/></svg>
<svg class="a" style="left:964px;top:64px;" width="14" height="11" viewBox="0 0 14 11"><text x="0" y="9" style="font-family:Liberation Sans" font-weight="bold" font-size="9.5" fill="#1aa01a">&#948;y</text></svg>
<svg class="a" style="left:966px;top:80px;" width="12" height="9" viewBox="0 0 12 9"><path d="M1.5 4.5 H11" stroke="#1aa01a" stroke-width="1.3"/><path d="M5 1 L1.5 4.5 L5 8" fill="none" stroke="#1aa01a" stroke-width="1.3"/></svg>
<div class="t" style="top:99.24px;font-size:12px;color:#333;left:828px;width:300px;text-align:center;">uy</div>
<svg class="a" style="left:1010px;top:71px;" width="23" height="25" viewBox="0 0 23 25"><path d="M0.5 6.5 H15.5 L21.8 0.5 H8.5 Z" fill="#8080d0" stroke="#1c1cc8" stroke-width="0.9"/>
<rect x="0.2" y="6.5" width="15.3" height="2.6" fill="#1414c8"/>
<path d="M15.5 6.5 L21.8 0.5 V2.8 L15.5 9 Z" fill="#3434c8"/>
<path d="M0.5 21.5 H15.5 L21.8 16 H6.5 Z" fill="#8080d0" stroke="#1c1cc8" stroke-width="0.9"/>
<rect x="6.5" y="9" width="9" height="12.5" fill="#7e7ed0"/>
<path d="M7 9 V22 M9 9 V22 M15.5 9 V16.5" stroke="#1c1cc8" stroke-width="1"/>
<path d="M9 21.5 L15.5 16" stroke="#1c1cc8" stroke-width="1"/>
<rect x="0.2" y="21.5" width="15.3" height="2.6" fill="#1414c8"/>
<path d="M15.5 21.5 L21.8 16 V18.5 L15.5 24.1 Z" fill="#3434c8"/></svg>
<svg class="a" style="left:1002px;top:64px;" width="14" height="11" viewBox="0 0 14 11"><text x="0" y="9" style="font-family:Liberation Sans" font-weight="bold" font-size="9.5" fill="#1a1aff">&#948;z</text></svg>
<svg class="a" style="left:1005px;top:79px;" width="8" height="11" viewBox="0 0 8 11"><path d="M4 10.5 V1.5" stroke="#1a1aff" stroke-width="1.3"/><path d="M1 5 L4 1.5 L7 5" fill="none" stroke="#1a1aff" stroke-width="1.3"/></svg>
<div class="t" style="top:99.24px;font-size:12px;color:#333;left:866px;width:300px;text-align:center;">uz</div>
<svg class="a" style="left:1048px;top:71px;" width="23" height="25" viewBox="0 0 23 25"><path d="M0.5 6.5 H15.5 L21.8 0.5 H8.5 Z" fill="#8080d0" stroke="#1c1cc8" stroke-width="0.9"/>
<rect x="0.2" y="6.5" width="15.3" height="2.6" fill="#1414c8"/>
<path d="M15.5 6.5 L21.8 0.5 V2.8 L15.5 9 Z" fill="#3434c8"/>
<path d="M0.5 21.5 H15.5 L21.8 16 H6.5 Z" fill="#8080d0" stroke="#1c1cc8" stroke-width="0.9"/>
<rect x="6.5" y="9" width="9" height="12.5" fill="#7e7ed0"/>
<path d="M7 9 V22 M9 9 V22 M15.5 9 V16.5" stroke="#1c1cc8" stroke-width="1"/>
<path d="M9 21.5 L15.5 16" stroke="#1c1cc8" stroke-width="1"/>
<rect x="0.2" y="21.5" width="15.3" height="2.6" fill="#1414c8"/>
<path d="M15.5 21.5 L21.8 16 V18.5 L15.5 24.1 Z" fill="#3434c8"/></svg>
<svg class="a" style="left:1040px;top:64px;" width="14" height="11" viewBox="0 0 14 11"><text x="0" y="9" style="font-family:Liberation Sans" font-weight="bold" font-size="9.5" fill="#ff1010">&#966;x</text></svg>
<svg class="a" style="left:1040px;top:80px;" width="12" height="12" viewBox="0 0 12 12"><path d="M8 1.5 Q11.5 5 7 8.5 L3.5 9.5" fill="none" stroke="#ff1010" stroke-width="1.3"/><path d="M5.5 7 L2.5 9.8 L6 11" fill="none" stroke="#ff1010" stroke-width="1.2"/></svg>
<div class="t" style="top:99.24px;font-size:12px;color:#333;left:904px;width:300px;text-align:center;">fix</div>
<svg class="a" style="left:1086px;top:71px;" width="23" height="25" viewBox="0 0 23 25"><path d="M0.5 6.5 H15.5 L21.8 0.5 H8.5 Z" fill="#8080d0" stroke="#1c1cc8" stroke-width="0.9"/>
<rect x="0.2" y="6.5" width="15.3" height="2.6" fill="#1414c8"/>
<path d="M15.5 6.5 L21.8 0.5 V2.8 L15.5 9 Z" fill="#3434c8"/>
<path d="M0.5 21.5 H15.5 L21.8 16 H6.5 Z" fill="#8080d0" stroke="#1c1cc8" stroke-width="0.9"/>
<rect x="6.5" y="9" width="9" height="12.5" fill="#7e7ed0"/>
<path d="M7 9 V22 M9 9 V22 M15.5 9 V16.5" stroke="#1c1cc8" stroke-width="1"/>
<path d="M9 21.5 L15.5 16" stroke="#1c1cc8" stroke-width="1"/>
<rect x="0.2" y="21.5" width="15.3" height="2.6" fill="#1414c8"/>
<path d="M15.5 21.5 L21.8 16 V18.5 L15.5 24.1 Z" fill="#3434c8"/></svg>
<svg class="a" style="left:1078px;top:64px;" width="14" height="11" viewBox="0 0 14 11"><text x="0" y="9" style="font-family:Liberation Sans" font-weight="bold" font-size="9.5" fill="#1aa01a">&#966;y</text></svg>
<svg class="a" style="left:1078px;top:80px;" width="12" height="12" viewBox="0 0 12 12"><path d="M8 1.5 Q11.5 5 7 8.5 L3.5 9.5" fill="none" stroke="#1aa01a" stroke-width="1.3"/><path d="M5.5 7 L2.5 9.8 L6 11" fill="none" stroke="#1aa01a" stroke-width="1.2"/></svg>
<div class="t" style="top:99.24px;font-size:12px;color:#333;left:942px;width:300px;text-align:center;">fiy</div>
<svg class="a" style="left:1124px;top:71px;" width="23" height="25" viewBox="0 0 23 25"><path d="M0.5 6.5 H15.5 L21.8 0.5 H8.5 Z" fill="#8080d0" stroke="#1c1cc8" stroke-width="0.9"/>
<rect x="0.2" y="6.5" width="15.3" height="2.6" fill="#1414c8"/>
<path d="M15.5 6.5 L21.8 0.5 V2.8 L15.5 9 Z" fill="#3434c8"/>
<path d="M0.5 21.5 H15.5 L21.8 16 H6.5 Z" fill="#8080d0" stroke="#1c1cc8" stroke-width="0.9"/>
<rect x="6.5" y="9" width="9" height="12.5" fill="#7e7ed0"/>
<path d="M7 9 V22 M9 9 V22 M15.5 9 V16.5" stroke="#1c1cc8" stroke-width="1"/>
<path d="M9 21.5 L15.5 16" stroke="#1c1cc8" stroke-width="1"/>
<rect x="0.2" y="21.5" width="15.3" height="2.6" fill="#1414c8"/>
<path d="M15.5 21.5 L21.8 16 V18.5 L15.5 24.1 Z" fill="#3434c8"/></svg>
<svg class="a" style="left:1116px;top:64px;" width="14" height="11" viewBox="0 0 14 11"><text x="0" y="9" style="font-family:Liberation Sans" font-weight="bold" font-size="9.5" fill="#1a1aff">&#966;z</text></svg>
<svg class="a" style="left:1116px;top:80px;" width="12" height="12" viewBox="0 0 12 12"><path d="M8 1.5 Q11.5 5 7 8.5 L3.5 9.5" fill="none" stroke="#1a1aff" stroke-width="1.3"/><path d="M5.5 7 L2.5 9.8 L6 11" fill="none" stroke="#1a1aff" stroke-width="1.2"/></svg>
<div class="t" style="top:99.24px;font-size:12px;color:#333;left:980px;width:300px;text-align:center;">fiz</div>
<div class="a" style="left:1157px;top:62px;width:40px;height:69px;border:1px solid #3c3c3c;border-radius:2px;background:linear-gradient(#fbbd7e,#fdd9ac 35%,#fdd39e 56%,#fb9628 57%,#fcb43a 78%,#ffd84e);box-shadow:inset 1px 1px 0 #ffe27a,inset -1px -1px 0 #ffe27a"></div>
<div class="t" style="top:67.04px;font-size:12px;color:#333;left:1028px;width:300px;text-align:center;">Initial</div>
<div class="t" style="top:67.04px;font-size:12px;color:#333;left:1081px;width:300px;text-align:center;">Increment</div>
<div class="t" style="top:67.04px;font-size:12px;color:#333;left:1132px;width:300px;text-align:center;">Total</div>
<div class="t" style="top:67.04px;font-size:12px;color:#333;left:1187px;width:300px;text-align:center;">No</div>
<div class="t" style="top:67.04px;font-size:12px;color:#333;left:1256px;width:300px;text-align:center;">Cross-section</div>
<div class="a" style="left:1307px;top:84px;width:56px;height:22px;border:1px solid #3c3c3c;border-radius:2px;background:linear-gradient(#fbc486,#fddab0 45%,#fdd4a0 54%,#fb9a2c 55%,#fcb83c 80%,#ffd84e);box-shadow:inset 1px 1px 0 #ffe27a,inset -1px -1px 0 #ffe27a"></div>
<div class="t" style="top:89.34px;font-size:12px;color:#333;left:1186px;width:300px;text-align:center;">Member</div>
<div class="t" style="top:89.34px;font-size:12px;color:#333;left:1256px;width:300px;text-align:center;">Global</div>
<div class="a" style="left:4px;top:159px;width:210px;height:869px;background:#fff;border:1px solid #808080"></div>
<div class="a" style="left:5px;top:160px;width:208px;height:21px;background:#f1f1f1;border-bottom:1px solid #a0a0a0"></div>
<div class="t" style="top:164.34px;font-size:12px;color:#111;left:9px;">Navigator</div>
<svg class="a" style="left:179px;top:167.5px;" width="9" height="6" viewBox="0 0 9 6"><path d="M0 0.5 H9 L4.5 5.5 Z" fill="#111"/></svg>
<svg class="a" style="left:198.5px;top:165.5px;" width="8" height="11" viewBox="0 0 8 11"><path d="M2 6.4 V2.6 Q2 0.6 4 0.6 Q6 0.6 6 2.6 V6.4 H7.3 V7.7 H0.7 V6.4 Z" fill="#000"/><path d="M3.4 2.2 V6.2" stroke="#fff" stroke-width="0.9"/><path d="M4 7.7 V10.6" stroke="#000" stroke-width="1.3"/></svg>
<div class="a" style="left:46px;top:838px;width:162px;height:23px;background:#f0f0f0;border:1px solid #dadada;border-radius:1px"></div>
<div class="a" style="left:35px;top:209px;width:1px;height:57.5px;background:#c8c8c8"></div>
<div class="a" style="left:36px;top:221.5px;width:10px;height:1px;background:#c8c8c8"></div>
<div class="a" style="left:36px;top:243.5px;width:10px;height:1px;background:#c8c8c8"></div>
<div class="a" style="left:36px;top:265.5px;width:10px;height:1px;background:#c8c8c8"></div>
<div class="a" style="left:35px;top:299px;width:1px;height:35.5px;background:#c8c8c8"></div>
<div class="a" style="left:36px;top:311.5px;width:10px;height:1px;background:#c8c8c8"></div>
<div class="a" style="left:36px;top:333.5px;width:10px;height:1px;background:#c8c8c8"></div>
<div class="a" style="left:35px;top:367px;width:1px;height:167.5px;background:#c8c8c8"></div>
<div class="a" style="left:36px;top:379.5px;width:10px;height:1px;background:#c8c8c8"></div>
<div class="a" style="left:36px;top:401.5px;width:10px;height:1px;background:#c8c8c8"></div>
<div class="a" style="left:36px;top:423.5px;width:10px;height:1px;background:#c8c8c8"></div>
<div class="a" style="left:36px;top:445.5px;width:10px;height:1px;background:#c8c8c8"></div>
<div class="a" style="left:36px;top:467.5px;width:10px;height:1px;background:#c8c8c8"></div>
<div class="a" style="left:36px;top:489.5px;width:10px;height:1px;background:#c8c8c8"></div>
<div class="a" style="left:36px;top:511.5px;width:10px;height:1px;background:#c8c8c8"></div>
<div class="a" style="left:36px;top:533.5px;width:10px;height:1px;background:#c8c8c8"></div>
<div class="a" style="left:35px;top:567px;width:1px;height:35.5px;background:#c8c8c8"></div>
<div class="a" style="left:36px;top:579.5px;width:10px;height:1px;background:#c8c8c8"></div>
<div class="a" style="left:36px;top:601.5px;width:10px;height:1px;background:#c8c8c8"></div>
<div class="a" style="left:35px;top:659px;width:1px;height:57.5px;background:#c8c8c8"></div>
<div class="a" style="left:36px;top:671.5px;width:10px;height:1px;background:#c8c8c8"></div>
<div class="a" style="left:36px;top:693.5px;width:10px;height:1px;background:#c8c8c8"></div>
<div class="a" style="left:36px;top:715.5px;width:10px;height:1px;background:#c8c8c8"></div>
<div class="a" style="left:35px;top:749px;width:1px;height:123.5px;background:#c8c8c8"></div>
<div class="a" style="left:36px;top:761.5px;width:10px;height:1px;background:#c8c8c8"></div>
<div class="a" style="left:36px;top:783.5px;width:10px;height:1px;background:#c8c8c8"></div>
<div class="a" style="left:36px;top:805.5px;width:10px;height:1px;background:#c8c8c8"></div>
<div class="a" style="left:36px;top:827.5px;width:10px;height:1px;background:#c8c8c8"></div>
<div class="a" style="left:36px;top:849.5px;width:10px;height:1px;background:#c8c8c8"></div>
<div class="a" style="left:36px;top:871.5px;width:10px;height:1px;background:#c8c8c8"></div>
<div class="a" style="left:35px;top:905px;width:1px;height:35.5px;background:#c8c8c8"></div>
<div class="a" style="left:36px;top:917.5px;width:10px;height:1px;background:#c8c8c8"></div>
<div class="a" style="left:36px;top:939.5px;width:10px;height:1px;background:#c8c8c8"></div>
<svg class="a" style="left:13px;top:194px;" width="8" height="8" viewBox="0 0 8 8"><path d="M7.5 0.5 V7.5 H0.5 Z" fill="#444"/></svg>
<div class="t" style="top:193.07px;font-size:11.5px;color:#111;letter-spacing:0.1px;left:30px;">Project</div>
<div class="t" style="top:216.69px;font-size:11px;color:#111;letter-spacing:0.1px;left:50px;">Project Data</div>
<div class="t" style="top:238.69px;font-size:11px;color:#111;letter-spacing:0.1px;left:50px;">Cross-Sections</div>
<div class="t" style="top:260.69px;font-size:11px;color:#111;letter-spacing:0.1px;left:50px;">Materials</div>
<svg class="a" style="left:13px;top:284px;" width="8" height="8" viewBox="0 0 8 8"><path d="M7.5 0.5 V7.5 H0.5 Z" fill="#444"/></svg>
<div class="t" style="top:283.07px;font-size:11.5px;color:#111;letter-spacing:0.1px;left:30px;">Geometry</div>
<div class="t" style="top:306.69px;font-size:11px;color:#111;letter-spacing:0.1px;left:50px;">Members</div>
<div class="t" style="top:328.69px;font-size:11px;color:#111;letter-spacing:0.1px;left:50px;">Supports</div>
<svg class="a" style="left:13px;top:352px;" width="8" height="8" viewBox="0 0 8 8"><path d="M7.5 0.5 V7.5 H0.5 Z" fill="#444"/></svg>
<div class="t" style="top:351.07px;font-size:11.5px;color:#111;letter-spacing:0.1px;left:30px;">Loads</div>
<div class="t" style="top:374.69px;font-size:11px;color:#111;letter-spacing:0.1px;left:50px;">Load Cases</div>
<div class="t" style="top:396.69px;font-size:11px;color:#111;letter-spacing:0.1px;left:50px;">Point Forces</div>
<div class="t" style="top:418.69px;font-size:11px;color:#111;letter-spacing:0.1px;left:50px;">Point Moments</div>
<div class="t" style="top:440.69px;font-size:11px;color:#111;letter-spacing:0.1px;left:50px;">Uniform Loads</div>
<div class="t" style="top:462.69px;font-size:11px;color:#111;letter-spacing:0.1px;left:50px;">Line Loads</div>
<div class="t" style="top:484.69px;font-size:11px;color:#111;letter-spacing:0.1px;left:50px;">Settlement</div>
<div class="t" style="top:506.69px;font-size:11px;color:#111;letter-spacing:0.3px;left:50px;">User-Defined Forces</div>
<div class="t" style="top:528.69px;font-size:11px;color:#111;letter-spacing:0.1px;left:50px;">Combinations</div>
<svg class="a" style="left:13px;top:552px;" width="8" height="8" viewBox="0 0 8 8"><path d="M7.5 0.5 V7.5 H0.5 Z" fill="#444"/></svg>
<div class="t" style="top:551.07px;font-size:11.5px;color:#111;letter-spacing:0.1px;left:30px;">Construction Stages</div>
<div class="t" style="top:574.69px;font-size:11px;color:#111;letter-spacing:0.1px;left:50px;">Settings</div>
<div class="t" style="top:596.69px;font-size:11px;color:#111;letter-spacing:0.3px;left:50px;">Construction Stages</div>
<svg class="a" style="left:13px;top:644px;" width="8" height="8" viewBox="0 0 8 8"><path d="M7.5 0.5 V7.5 H0.5 Z" fill="#444"/></svg>
<div class="t" style="top:643.07px;font-size:11.5px;color:#111;letter-spacing:0.1px;left:30px;">Results</div>
<div class="t" style="top:666.69px;font-size:11px;color:#111;letter-spacing:0.1px;left:50px;">Reactions</div>
<div class="t" style="top:688.69px;font-size:11px;color:#111;letter-spacing:0.1px;left:50px;">Deformations</div>
<div class="t" style="top:710.69px;font-size:11px;color:#111;letter-spacing:0.1px;left:50px;">Internal Forces</div>
<svg class="a" style="left:13px;top:734px;" width="8" height="8" viewBox="0 0 8 8"><path d="M7.5 0.5 V7.5 H0.5 Z" fill="#444"/></svg>
<div class="t" style="top:733.07px;font-size:11.5px;color:#111;letter-spacing:0.1px;left:30px;">Concrete Design 1D</div>
<div class="t" style="top:756.69px;font-size:11px;color:#111;letter-spacing:0.1px;left:50px;">Data</div>
<div class="t" style="top:778.69px;font-size:11px;color:#111;letter-spacing:0.1px;left:50px;">Reinforcement</div>
<div class="t" style="top:800.69px;font-size:11px;color:#111;letter-spacing:0.1px;left:50px;">Deflection</div>
<div class="t" style="top:822.69px;font-size:11px;color:#111;letter-spacing:0.3px;left:50px;">Redistribution and reduction</div>
<div class="t" style="top:844.69px;font-size:11px;color:#111;letter-spacing:0.3px;left:50px;">Lateral stability</div>
<div class="t" style="top:866.69px;font-size:11px;color:#111;letter-spacing:0.1px;left:50px;">Results</div>
<svg class="a" style="left:13px;top:890px;" width="8" height="8" viewBox="0 0 8 8"><path d="M7.5 0.5 V7.5 H0.5 Z" fill="#444"/></svg>
<div class="t" style="top:889.07px;font-size:11.5px;color:#111;letter-spacing:0.1px;left:30px;">Report</div>
<div class="t" style="top:912.69px;font-size:11px;color:#111;letter-spacing:0.1px;left:50px;">Standard</div>
<div class="t" style="top:934.69px;font-size:11px;color:#111;letter-spacing:0.1px;left:50px;">Detailed</div>
<div class="a" style="left:218px;top:157px;width:39px;height:24px;background:linear-gradient(#fefefe,#f8f8f8);border:1px solid #f0b820;border-bottom:none;border-radius:3px 3px 0 0"></div>
<div class="t" style="top:164.34px;font-size:12px;color:#111;left:87.5px;width:300px;text-align:center;">Main</div>
<div class="a" style="left:218px;top:180px;width:1698px;height:444px;background:#fafafa;border:1px solid #808080;border-top-color:#f4f4f4;border-radius:0 3px 3px 3px"></div>
<div class="a" style="left:257px;top:179px;width:1655px;height:1px;background:#808080"></div>
<div class="a" style="left:223px;top:184px;width:1688px;height:435px;background:#fff;border:1px solid #7a7a7a;box-shadow:inset 1px 1px 0 #d8d8d8"></div>
<div class="a" style="left:227px;top:188px;width:24px;height:24px;border:1px solid #b4b4b4;background:linear-gradient(#f2f2f2,#d8d8d8)"></div>
<svg class="a" style="left:231px;top:192px;" width="16" height="16" viewBox="0 0 16 16"><g stroke="#777" stroke-width="1.4" fill="none"><path d="M1.5 1.5 L5 5 M1.5 1.5 V4.5 M1.5 1.5 H4.5"/><path d="M14.5 1.5 L11 5 M14.5 1.5 V4.5 M14.5 1.5 H11.5"/><path d="M1.5 14.5 L5 11 M1.5 14.5 V11.5 M1.5 14.5 H4.5"/><path d="M14.5 14.5 L11 11 M14.5 14.5 V11.5 M14.5 14.5 H11.5"/></g></svg>
<div class="a" style="left:340px;top:340px;width:1482.5px;height:44px;background:#efefef;border-left:1px solid #222;border-right:1px solid #222"></div>
<div class="a" style="left:340px;top:339px;width:1483.5px;height:2px;background:#484848"></div>
<div class="a" style="left:340px;top:353px;width:1482.5px;height:1px;background:#111"></div>
<div class="a" style="left:340px;top:355px;width:1482.5px;height:1px;background:#111"></div>
<svg class="a" style="left:340px;top:383px;" width="1484.5" height="78" viewBox="0 0 1484.5 78"><rect x="0" y="1" width="1482.5" height="29.5" fill="#a8d8f6"/>
<rect x="0" y="30.5" width="1482.5" height="14.5" fill="#a6d6f4"/>
<rect x="0" y="45" width="1482.5" height="30" fill="#addcfa"/>
<g transform="translate(-340,-383)" stroke="#7ba9c9" stroke-width="1"><path d="M354.82 384 V458" /><path d="M369.65 384 V458" /><path d="M384.48 384 V458" /><path d="M399.30 384 V458" /><path d="M414.12 384 V458" /><path d="M428.95 384 V458" /><path d="M443.77 384 V458" /><path d="M458.60 384 V458" /><path d="M473.42 384 V458" /><path d="M488.25 384 V458" /><path d="M503.07 384 V458" /><path d="M517.90 384 V458" /><path d="M532.73 384 V458" /><path d="M547.55 384 V458" /><path d="M562.38 384 V458" /><path d="M577.20 384 V458" /><path d="M592.02 384 V458" /><path d="M606.85 384 V458" /><path d="M621.67 384 V458" /><path d="M636.50 384 V458" /><path d="M651.33 384 V458" /><path d="M666.15 384 V458" /><path d="M680.97 384 V458" /><path d="M695.80 384 V458" /><path d="M710.62 384 V458" /><path d="M725.45 384 V458" /><path d="M740.27 384 V458" /><path d="M755.10 384 V458" /><path d="M769.92 384 V458" /><path d="M784.75 384 V458" /><path d="M799.58 384 V458" /><path d="M814.40 384 V458" /><path d="M829.22 384 V458" /><path d="M844.05 384 V458" /><path d="M858.88 384 V458" /><path d="M873.70 384 V458" /><path d="M888.52 384 V458" /><path d="M903.35 384 V458" /><path d="M918.17 384 V458" /><path d="M933.00 384 V458" /><path d="M947.82 384 V458" /><path d="M962.65 384 V458" /><path d="M977.48 384 V458" /><path d="M992.30 384 V458" /><path d="M1007.12 384 V458" /><path d="M1021.95 384 V458" /><path d="M1036.78 384 V458" /><path d="M1051.60 384 V458" /><path d="M1066.42 384 V458" /><path d="M1081.25 384 V458" /><path d="M1096.07 384 V458" /><path d="M1110.90 384 V458" /><path d="M1125.72 384 V458" /><path d="M1140.55 384 V458" /><path d="M1155.38 384 V458" /><path d="M1170.20 384 V458" /><path d="M1185.03 384 V458" /><path d="M1199.85 384 V458" /><path d="M1214.67 384 V458" /><path d="M1229.50 384 V458" /><path d="M1244.32 384 V458" /><path d="M1259.15 384 V458" /><path d="M1273.97 384 V458" /><path d="M1288.80 384 V458" /><path d="M1303.62 384 V458" /><path d="M1318.45 384 V458" /><path d="M1333.28 384 V458" /><path d="M1348.10 384 V458" /><path d="M1362.92 384 V458" /><path d="M1377.75 384 V458" /><path d="M1392.58 384 V458" /><path d="M1407.40 384 V458" /><path d="M1422.22 384 V458" /><path d="M1437.05 384 V458" /><path d="M1451.88 384 V458" /><path d="M1466.70 384 V458" /><path d="M1481.52 384 V458" /><path d="M1496.35 384 V458" /><path d="M1511.17 384 V458" /><path d="M1526.00 384 V458" /><path d="M1540.83 384 V458" /><path d="M1555.65 384 V458" /><path d="M1570.47 384 V458" /><path d="M1585.30 384 V458" /><path d="M1600.12 384 V458" /><path d="M1614.95 384 V458" /><path d="M1629.77 384 V458" /><path d="M1644.60 384 V458" /><path d="M1659.42 384 V458" /><path d="M1674.25 384 V458" /><path d="M1689.08 384 V458" /><path d="M1703.90 384 V458" /><path d="M1718.72 384 V458" /><path d="M1733.55 384 V458" /><path d="M1748.38 384 V458" /><path d="M1763.20 384 V458" /><path d="M1778.02 384 V458" /><path d="M1792.85 384 V458" /><path d="M1807.67 384 V458" /></g>
<path d="M0 30.5 H1482.5 M0 32.5 H1482.5" stroke="#7aa8c8" stroke-width="1"/>
<path d="M0 45.5 H1482.5" stroke="#6f9dbd" stroke-width="2"/>
<path d="M0 1 H1482.5" stroke="#5a6a7a" stroke-width="1"/>
<path d="M0 75 H1482.5" stroke="#333" stroke-width="1.4"/>
<path d="M0.5 1 V75 M1482.0 1 V75" stroke="#8ab0d0" stroke-width="1"/></svg>
<svg class="a" style="left:336px;top:380px;" width="8" height="8" viewBox="0 0 8 8"><circle cx="4" cy="4" r="2.1" fill="#1030ff"/></svg>
<svg class="a" style="left:1818px;top:380px;" width="8" height="8" viewBox="0 0 8 8"><circle cx="4" cy="4" r="2.1" fill="#1030ff"/></svg>
<div class="t" style="top:373.11px;font-size:10.5px;color:#ff0000;left:931px;width:300px;text-align:center;">1</div>
<svg class="a" style="left:1076px;top:379px;" width="10" height="10" viewBox="0 0 10 10"><path d="M1 1 L5 5 L9 1" stroke="#222" stroke-width="1.2" fill="none"/><path d="M5 5 L1 9 M5 5 L9 9" stroke="#6a98c0" stroke-width="1.2" fill="none"/></svg>
<div class="t" style="top:431.00px;font-size:13px;color:#2850ff;left:1672px;width:300px;text-align:center;">2</div>
<svg class="a" style="left:336px;top:432px;" width="5" height="12" viewBox="0 0 5 12"><path d="M1 3 L4 1 V11" stroke="#3a6aff" stroke-width="1" fill="none"/></svg>
<div class="a" style="left:295px;top:443px;width:61px;height:34px;border:3.5px solid #ff0000;border-radius:11px"></div>
<div class="t" style="top:454.19px;font-size:11px;color:#111;left:174px;width:300px;text-align:center;">-220.4</div>
<svg class="a" style="left:226px;top:568px;" width="50" height="45" viewBox="0 0 50 45"><path d="M8 40 V10" stroke="#3030ff" stroke-width="1.3"/><path d="M4.5 24 L8 10 L11.5 24" fill="none" stroke="#3030ff" stroke-width="1.2"/>
<path d="M8 40 H38" stroke="#ff2020" stroke-width="1.3"/><path d="M24 36.5 L38 40 L24 43.5" fill="none" stroke="#ff2020" stroke-width="1.2"/></svg>
<div class="t" style="top:569.84px;font-size:12px;color:#0a0aff;left:238.8px;">Z</div>
<div class="t" style="top:593.84px;font-size:12px;color:#ff1010;left:263.8px;">X</div>
<div class="t" style="top:595.34px;font-size:12px;color:#111;letter-spacing:-0.25px;left:1600px;width:300px;text-align:right;">X = 9.89&nbsp;&nbsp;Z = -1.67</div>
<div class="a" style="left:218px;top:629px;width:1061px;height:399px;background:#c0c0c0;border:1px solid #7a7a7a;border-right:2px solid #7a7a7a;border-bottom:2px solid #7a7a7a;border-radius:3px 3px 0 0"></div>
<div class="a" style="left:219px;top:630px;width:1058px;height:19px;background:linear-gradient(#acacac,#d6d6d6 70%,#ececec);border-radius:2px 2px 0 0"></div>
<div class="a" style="left:219px;top:649px;width:1058px;height:1px;background:#9a9a9a"></div>
<div class="t" style="top:633.34px;font-size:12px;color:#111;left:222.5px;">Data</div>
<svg class="a" style="left:1244px;top:636.5px;" width="9" height="6" viewBox="0 0 9 6"><path d="M0 0.5 H9 L4.5 5.5 Z" fill="#111"/></svg>
<svg class="a" style="left:1263px;top:635px;" width="8" height="11" viewBox="0 0 8 11"><path d="M2 6.4 V2.6 Q2 0.6 4 0.6 Q6 0.6 6 2.6 V6.4 H7.3 V7.7 H0.7 V6.4 Z" fill="#000"/><path d="M3.4 2.2 V6.2" stroke="#fff" stroke-width="0.9"/><path d="M4 7.7 V10.6" stroke="#000" stroke-width="1.3"/></svg>
<div class="a" style="left:219px;top:674px;width:1058px;height:352px;background:#fff;border-top:1px solid #d0d0d0"></div>
<div class="a" style="left:222px;top:656px;width:34px;height:19px;background:linear-gradient(#f6f6f6,#d8d8d8);border:1px solid #9c9c9c;border-bottom:none;border-radius:3px 3px 0 0"></div>
<div class="t" style="top:658.64px;font-size:12px;color:#111;left:89.0px;width:300px;text-align:center;">Data</div>
<div class="a" style="left:258px;top:656px;width:85px;height:19px;background:linear-gradient(#f6f6f6,#d8d8d8);border:1px solid #9c9c9c;border-bottom:none;border-radius:3px 3px 0 0"></div>
<div class="t" style="top:658.64px;font-size:12px;color:#111;left:150.5px;width:300px;text-align:center;">Combinations</div>
<div class="a" style="left:345px;top:654px;width:91px;height:21px;background:#fff;border:1px solid #9c9c9c;border-bottom:none;border-radius:3px 3px 0 0"></div>
<div class="t" style="top:658.64px;font-size:12px;color:#111;left:240.5px;width:300px;text-align:center;">Analysis results</div>
<div class="t" style="top:696.84px;font-size:12px;color:#111;left:225.5px;">Design member</div>
<div class="a" style="left:314px;top:690px;width:80px;height:25px;background:linear-gradient(#f4f4f4,#e4e4e4);border:1px solid #acacac"></div>
<div class="t" style="top:696.34px;font-size:12px;color:#111;letter-spacing:-0.35px;left:320px;">LTB beam</div>
<svg class="a" style="left:380px;top:700px;" width="8" height="5" viewBox="0 0 8 5"><path d="M0.5 0.5 L4 4 L7.5 0.5" fill="none" stroke="#555" stroke-width="1.1"/></svg>
<div class="t" style="top:752.55px;font-size:14px;color:#111;font-weight:bold;left:238px;">Deflection</div>
<div class="a" style="left:238px;top:776px;width:700px;height:120px;background:#fff;border:1px solid #c8c8c8"></div>
<div class="a" style="left:239px;top:777px;width:698px;height:34px;background:#efefef"></div>
<div class="a" style="left:239px;top:832px;width:698px;height:21px;background:#f3f3f3"></div>
<div class="a" style="left:239px;top:874px;width:698px;height:21px;background:#f3f3f3"></div>
<div class="a" style="left:239px;top:811px;width:698px;height:1px;background:#d6d6d6"></div>
<div class="a" style="left:239px;top:832px;width:698px;height:1px;background:#d6d6d6"></div>
<div class="a" style="left:239px;top:853px;width:698px;height:1px;background:#d6d6d6"></div>
<div class="a" style="left:239px;top:874px;width:698px;height:1px;background:#d6d6d6"></div>
<div class="a" style="left:311px;top:777px;width:1px;height:118px;background:#d6d6d6"></div>
<div class="a" style="left:442px;top:777px;width:1px;height:118px;background:#d6d6d6"></div>
<div class="a" style="left:507px;top:777px;width:1px;height:118px;background:#d6d6d6"></div>
<div class="a" style="left:572px;top:777px;width:1px;height:118px;background:#d6d6d6"></div>
<div class="a" style="left:658px;top:777px;width:1px;height:118px;background:#d6d6d6"></div>
<div class="a" style="left:723px;top:777px;width:1px;height:118px;background:#d6d6d6"></div>
<div class="a" style="left:794px;top:777px;width:1px;height:118px;background:#d6d6d6"></div>
<div class="a" style="left:866px;top:777px;width:1px;height:118px;background:#d6d6d6"></div>
<div class="t" style="top:787.84px;font-size:12px;color:#111;font-weight:bold;left:124.5px;width:300px;text-align:center;">Member</div>
<div class="t" style="top:787.84px;font-size:12px;color:#111;font-weight:bold;left:226.5px;width:300px;text-align:center;">Combination</div>
<div class="t" style="top:781.34px;font-size:12px;color:#111;font-weight:bold;left:324.5px;width:300px;text-align:center;">Dx</div>
<div class="t" style="top:794.34px;font-size:12px;color:#111;left:324.5px;width:300px;text-align:center;">[m]</div>
<div class="t" style="top:781.34px;font-size:12px;color:#111;font-weight:bold;left:389.5px;width:300px;text-align:center;">u<sub>x</sub></div>
<div class="t" style="top:794.34px;font-size:12px;color:#111;left:389.5px;width:300px;text-align:center;">[mm]</div>
<div class="t" style="top:781.34px;font-size:12px;color:#111;font-weight:bold;left:465.0px;width:300px;text-align:center;">u<sub>y</sub></div>
<div class="t" style="top:794.34px;font-size:12px;color:#111;left:465.0px;width:300px;text-align:center;">[mm]</div>
<div class="t" style="top:781.34px;font-size:12px;color:#111;font-weight:bold;left:540.5px;width:300px;text-align:center;">u<sub>z</sub></div>
<div class="t" style="top:794.34px;font-size:12px;color:#111;left:540.5px;width:300px;text-align:center;">[mm]</div>
<div class="t" style="top:781.34px;font-size:12px;color:#111;font-weight:bold;left:608.5px;width:300px;text-align:center;">fi<sub>x</sub></div>
<div class="t" style="top:794.34px;font-size:12px;color:#111;left:608.5px;width:300px;text-align:center;">[mrad]</div>
<div class="t" style="top:781.34px;font-size:12px;color:#111;font-weight:bold;left:680.0px;width:300px;text-align:center;">fi<sub>y</sub></div>
<div class="t" style="top:794.34px;font-size:12px;color:#111;left:680.0px;width:300px;text-align:center;">[mrad]</div>
<div class="t" style="top:781.34px;font-size:12px;color:#111;font-weight:bold;left:751.75px;width:300px;text-align:center;">fi<sub>z</sub></div>
<div class="t" style="top:794.34px;font-size:12px;color:#111;left:751.75px;width:300px;text-align:center;">[mrad]</div>
<div class="t" style="top:815.84px;font-size:12px;color:#111;left:246px;">1</div>
<div class="t" style="top:815.84px;font-size:12px;color:#111;left:318px;">Lifting2</div>
<div class="t" style="top:815.84px;font-size:12px;color:#111;left:201px;width:300px;text-align:right;">0.00</div>
<div class="t" style="top:815.84px;font-size:12px;color:#111;left:266px;width:300px;text-align:right;">0.000</div>
<div class="t" style="top:815.84px;font-size:12px;color:#111;left:352px;width:300px;text-align:right;">0.000</div>
<div class="t" style="top:815.84px;font-size:12px;color:#111;left:417px;width:300px;text-align:right;">0.000</div>
<div class="t" style="top:815.84px;font-size:12px;color:#111;left:488px;width:300px;text-align:right;">-220.4</div>
<div class="t" style="top:815.84px;font-size:12px;color:#111;left:560px;width:300px;text-align:right;">0.0</div>
<div class="t" style="top:815.84px;font-size:12px;color:#111;left:631.5px;width:300px;text-align:right;">0.0</div>
<div class="t" style="top:836.84px;font-size:12px;color:#111;left:246px;">1</div>
<div class="t" style="top:836.84px;font-size:12px;color:#111;left:318px;">Lifting2</div>
<div class="t" style="top:836.84px;font-size:12px;color:#111;left:201px;width:300px;text-align:right;">10.00</div>
<div class="t" style="top:836.84px;font-size:12px;color:#111;left:266px;width:300px;text-align:right;">0.000</div>
<div class="t" style="top:836.84px;font-size:12px;color:#111;left:352px;width:300px;text-align:right;">350.000</div>
<div class="t" style="top:836.84px;font-size:12px;color:#111;left:417px;width:300px;text-align:right;">0.000</div>
<div class="t" style="top:836.84px;font-size:12px;color:#111;left:488px;width:300px;text-align:right;">-220.4</div>
<div class="t" style="top:836.84px;font-size:12px;color:#111;left:560px;width:300px;text-align:right;">0.0</div>
<div class="t" style="top:836.84px;font-size:12px;color:#111;left:631.5px;width:300px;text-align:right;">0.0</div>
<div class="t" style="top:857.84px;font-size:12px;color:#111;left:246px;">1</div>
<div class="t" style="top:857.84px;font-size:12px;color:#111;left:318px;">Lifting2</div>
<div class="t" style="top:857.84px;font-size:12px;color:#111;left:201px;width:300px;text-align:right;">8.00</div>
<div class="t" style="top:857.84px;font-size:12px;color:#111;left:266px;width:300px;text-align:right;">0.000</div>
<div class="t" style="top:857.84px;font-size:12px;color:#111;left:352px;width:300px;text-align:right;">332.870</div>
<div class="t" style="top:857.84px;font-size:12px;color:#111;left:417px;width:300px;text-align:right;">0.000</div>
<div class="t" style="top:857.84px;font-size:12px;color:#111;left:488px;width:300px;text-align:right;">-220.4</div>
<div class="t" style="top:857.84px;font-size:12px;color:#111;left:560px;width:300px;text-align:right;">0.0</div>
<div class="t" style="top:857.84px;font-size:12px;color:#111;left:631.5px;width:300px;text-align:right;">0.0</div>
<div class="t" style="top:878.84px;font-size:12px;color:#111;left:246px;">1</div>
<div class="t" style="top:878.84px;font-size:12px;color:#111;left:318px;">Lifting2</div>
<div class="t" style="top:878.84px;font-size:12px;color:#111;left:201px;width:300px;text-align:right;">6.20</div>
<div class="t" style="top:878.84px;font-size:12px;color:#111;left:266px;width:300px;text-align:right;">0.000</div>
<div class="t" style="top:878.84px;font-size:12px;color:#111;left:352px;width:300px;text-align:right;">289.478</div>
<div class="t" style="top:878.84px;font-size:12px;color:#111;left:417px;width:300px;text-align:right;">0.000</div>
<div class="t" style="top:878.84px;font-size:12px;color:#111;left:488px;width:300px;text-align:right;">-220.4</div>
<div class="t" style="top:878.84px;font-size:12px;color:#111;left:560px;width:300px;text-align:right;">0.0</div>
<div class="t" style="top:878.84px;font-size:12px;color:#111;left:631.5px;width:300px;text-align:right;">0.0</div>
<div class="a" style="left:1283px;top:629px;width:633px;height:399px;background:#fff;border:1px solid #808080;border-radius:3px 3px 0 0"></div>
<div class="a" style="left:1284px;top:630px;width:631px;height:19px;background:#f0f0f0;border-radius:2px 2px 0 0"></div>
<div class="a" style="left:1284px;top:649px;width:631px;height:1px;background:#a0a0a0"></div>
<div class="t" style="top:633.34px;font-size:12px;color:#111;left:1287px;">Details</div>
<svg class="a" style="left:1881px;top:636.5px;" width="9" height="6" viewBox="0 0 9 6"><path d="M0 0.5 H9 L4.5 5.5 Z" fill="#111"/></svg>
<svg class="a" style="left:1900px;top:635px;" width="8" height="11" viewBox="0 0 8 11"><path d="M2 6.4 V2.6 Q2 0.6 4 0.6 Q6 0.6 6 2.6 V6.4 H7.3 V7.7 H0.7 V6.4 Z" fill="#000"/><path d="M3.4 2.2 V6.2" stroke="#fff" stroke-width="0.9"/><path d="M4 7.7 V10.6" stroke="#000" stroke-width="1.3"/></svg>
<div class="a" style="left:1287px;top:653px;width:24px;height:24px;border:1px solid #b4b4b4;background:linear-gradient(#f2f2f2,#d8d8d8)"></div>
<svg class="a" style="left:1291px;top:657px;" width="16" height="16" viewBox="0 0 16 16"><g stroke="#777" stroke-width="1.4" fill="none"><path d="M1.5 1.5 L5 5 M1.5 1.5 V4.5 M1.5 1.5 H4.5"/><path d="M14.5 1.5 L11 5 M14.5 1.5 V4.5 M14.5 1.5 H11.5"/><path d="M1.5 14.5 L5 11 M1.5 14.5 V11.5 M1.5 14.5 H4.5"/><path d="M14.5 14.5 L11 11 M14.5 14.5 V11.5 M14.5 14.5 H11.5"/></g></svg>
</body></html>
